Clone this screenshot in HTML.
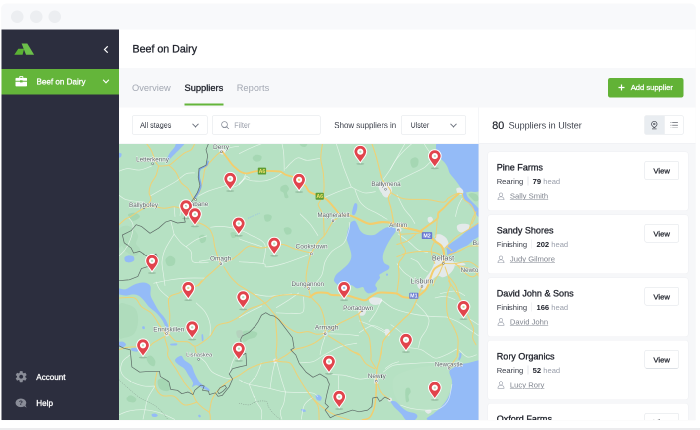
<!DOCTYPE html>
<html lang="en">
<head>
<meta charset="utf-8">
<title>Beef on Dairy – Suppliers</title>
<style>
html,body{margin:0;padding:0;background:#fff;overflow:hidden}
body{width:700px;height:430px;position:relative;font-family:"Liberation Sans",sans-serif;color:#23262f}
#stage{position:absolute;left:0;top:0;width:1400px;height:860px;transform:scale(.5);transform-origin:0 0;overflow:hidden;will-change:transform}
#stage *{box-sizing:border-box}
.abs{position:absolute}
#strip{left:0;top:856px;width:1400px;height:4px;background:#ececee}
#win{left:3px;top:8px;width:1388px;height:832px;border-radius:10px 10px 0 0;overflow:hidden;background:#fff;box-shadow:0 0 2px rgba(40,50,70,.10)}
#tbar{left:0;top:0;width:1388px;height:51px;background:#f8f9fb}
.dot{width:25px;height:25px;border-radius:50%;background:#eceef1;top:13px}
#side{left:0;top:51px;width:235px;height:781px;background:#2c2e3e}
#proj{left:0;top:79px;width:235px;height:51px;background:#64b53a}
.stxt{color:#fff;font-size:16.2px;line-height:20px;white-space:nowrap;-webkit-text-stroke:0.6px #fff}
#head{left:235px;top:51px;width:1153px;height:77px;background:#fff}
#title{left:262px;top:76.4px;font-size:21.3px;line-height:28px;white-space:nowrap;color:#23262f;-webkit-text-stroke:0.6px #23262f}
#tabs{left:235px;top:128px;width:1153px;height:78.6px;background:#f7f8fa}
.tab{top:155.6px;font-size:18.6px;line-height:24px;white-space:nowrap;color:#a3a8b3}
.tab.on{color:#23262f;-webkit-text-stroke:0.6px #23262f}
#uline{left:366px;top:198.6px;width:78px;height:4.8px;background:#64b53a}
#addbtn{left:1213px;top:147.6px;width:150.6px;height:39.2px;background:#62b236;border-radius:4.4px;color:#fff}
#filters{left:235px;top:206.6px;width:719.2px;height:73.8px;background:#fff;border-bottom:1.2px solid #eef0f3}
.box{border:1.4px solid #e0e3e8;border-radius:3px;background:#fff}
.ftxt{font-size:14.4px;line-height:20px;white-space:nowrap;color:#3c404b}
#rhead{left:954.2px;top:206.6px;width:434px;height:72.4px;background:#fff;border-left:1.2px solid #eceef1;border-bottom:1.2px solid #eceef1}
#list{left:954.2px;top:279px;width:434px;height:553px;background:#f6f7f9;border-left:1.2px solid #eceef1}
.card{left:17.6px;width:400.4px;height:117.2px;background:#fff;border-radius:5px;box-shadow:0 0 0 1px #eff0f3}
.card .t{left:17.6px;top:19.2px;font-size:18.1px;line-height:24px;white-space:nowrap;color:#23262f;-webkit-text-stroke:0.6px #23262f}
.card .r{left:17.6px;top:49.2px;font-size:15.2px;line-height:20px;white-space:nowrap;color:#3c404b}
.card .r b{color:#23262f}
.card .r i{font-style:normal;color:#9a9fab}
.card .r .sep{display:inline-block;width:1.2px;height:18px;background:#e3e6ea;vertical-align:-3px;margin:0 8.8px 0 8.8px}
.card .p{left:44px;top:78.4px;font-size:15.32px;line-height:20px;white-space:nowrap;color:#80858f;text-decoration:underline;text-decoration-thickness:1px;text-underline-offset:2.4px}
.card svg.u{left:19.2px;top:80.8px;width:14px;height:15.4px}
.view{left:313.2px;top:18.4px;width:68.8px;height:37.2px;padding-top:1.8px;border:1.6px solid #dde1e6;border-radius:4px;background:#fff;font-size:15.4px;line-height:34.8px;text-align:center;color:#23262f;-webkit-text-stroke:0.5px #23262f}
#map{left:235px;top:280.4px;width:719.2px;height:551.6px;background:#b6e1c3;overflow:hidden}
</style>
</head>
<body>
<div id="stage">
 <div id="strip" class="abs"></div>
 <div id="win" class="abs">
  <div id="tbar" class="abs">
   <div class="dot abs" style="left:18.8px"></div>
   <div class="dot abs" style="left:56.6px"></div>
   <div class="dot abs" style="left:94.4px"></div>
  </div>

  <div id="side" class="abs">
   <svg class="abs" style="left:25px;top:27px;width:42px;height:25px" viewBox="14 43 21 12.5"><path d="M21.600 43.500H27.300L34.100 54.800H26z" fill="#6cc04a"/><path d="M18.300 48.700H24.100L22.600 54.800H14.300z" fill="#5bb234"/></svg>
   <svg class="abs" style="left:204px;top:32px;width:10px;height:16px" viewBox="0 0 5 8"><path d="M4.2 0.8L1 4l3.2 3.2" fill="none" stroke="#fff" stroke-width="1.2"/></svg>
   <div id="proj" class="abs">
    <svg class="abs" style="left:28px;top:14.4px;width:23.2px;height:20.8px" viewBox="0 0 11.6 10.4"><path d="M3.8 1.9V.9c0-.5.4-.9.9-.9h2.2c.5 0 .9.4.9.9v1h2.9c.5 0 .9.4.9.9v2H7.1v-.5H4.5v.5H0v-2c0-.5.4-.9.9-.9zM4.7.9v1h2.2v-1zM0 5.7h4.5v.7h2.6v-.7h4.5v3.8c0 .5-.4.9-.9.9H.9c-.5 0-.9-.4-.9-.9z" fill="#fff"/></svg>
    <div class="abs stxt" style="left:70px;top:15.2px">Beef on Dairy</div>
    <svg class="abs" style="left:201.6px;top:20px;width:14px;height:10px" viewBox="0 0 7 5"><path d="M0.6 0.8l2.9 3 2.9-3" fill="none" stroke="#fff" stroke-width="1.1"/></svg>
   </div>
   <svg class="abs" style="left:26px;top:681.2px;width:26.8px;height:26.8px" viewBox="0 0 24 24"><path fill="#8a8d98" d="M19.4 13c.04-.3.06-.7.06-1s-.02-.7-.07-1l2.1-1.700c.2-.15.25-.42.12-.64l-2-3.460c-.12-.22-.39-.3-.61-.22l-2.490 1c-.52-.4-1.080-.73-1.690-.98l-.38-2.650A.49.49 0 0 0 14 2h-4c-.25 0-.46.18-.49.420l-.38 2.650c-.61.250-1.170.59-1.690.98l-2.490-1c-.23-.09-.49 0-.61.220l-2 3.460c-.13.220-.07.490.12.640l2.110 1.650c-.04.320-.07.650-.07.980s.03.660.07.980l-2.110 1.650c-.19.150-.24.420-.12.640l2 3.460c.12.220.39.300.61.220l2.490-1c.52.400 1.080.73 1.690.98l.38 2.650c.03.240.24.420.49.420h4c.25 0 .46-.18.49-.42l.38-2.650c.61-.25 1.170-.59 1.690-.98l2.490 1c.23.090.49 0 .61-.22l2-3.460c.12-.22.070-.49-.12-.64zM12 15.500c-1.930 0-3.500-1.570-3.500-3.500s1.570-3.500 3.500-3.500 3.500 1.570 3.500 3.500-1.570 3.500-3.500 3.500z"/></svg>
   <div class="abs stxt" style="left:69.6px;top:685.2px">Account</div>
   <svg class="abs" style="left:28px;top:737.6px;width:22.8px;height:18.8px" viewBox="0 0 11.400 9.400"><ellipse cx="5.400" cy="4.300" rx="5.400" ry="4.300" fill="#8a8d98"/><path d="M7.500 7l3.700 2.200-1.800-3.600z" fill="#8a8d98"/><text x="5.400" y="6.700" font-size="6.600" font-weight="bold" text-anchor="middle" fill="#2c2e3e" font-family="Liberation Sans, sans-serif">?</text></svg>
   <div class="abs stxt" style="left:69.6px;top:737.2px">Help</div>
  </div>

  <div id="head" class="abs"></div>
  <div id="title" class="abs">Beef on Dairy</div>

  <div id="tabs" class="abs"></div>
  <div class="tab abs" style="left:261px">Overview</div>
  <div class="tab on abs" style="left:366px">Suppliers</div>
  <div class="tab abs" style="left:470.4px">Reports</div>
  <div id="uline" class="abs"></div>
  <div id="addbtn" class="abs">
   <svg class="abs" style="left:21px;top:13px;width:12px;height:12px" viewBox="0 0 6 6"><path d="M3 0v6M0 3h6" stroke="#fff" stroke-width="1.200"/></svg>
   <div class="abs" style="left:45.4px;top:9.2px;font-size:15.2px;line-height:20px;-webkit-text-stroke:0.5px #fff;white-space:nowrap">Add supplier</div>
  </div>

  <div id="filters" class="abs">
   <div class="box abs" style="left:26px;top:16px;width:151px;height:38.6px">
    <div class="abs ftxt" style="left:15.2px;top:8.4px">All stages</div>
    <svg class="abs" style="left:119.2px;top:14.4px;width:14px;height:10px" viewBox="0 0 7 5"><path d="M0.500 0.800l3 3 3-3" fill="none" stroke="#6b717d" stroke-width=".95"/></svg>
   </div>
   <div class="box abs" style="left:186.4px;top:16px;width:216.8px;height:38.6px">
    <svg class="abs" style="left:16.8px;top:10px;width:16.8px;height:16.8px" viewBox="0 0 8.400 8.400"><circle cx="3.500" cy="3.500" r="2.900" fill="none" stroke="#8e939e" stroke-width=".8"/><path d="M5.600 5.600l2.300 2.300" stroke="#8e939e" stroke-width=".9"/></svg>
    <div class="abs ftxt" style="left:43.2px;top:8.4px;color:#9a9fab">Filter</div>
   </div>
   <div class="abs ftxt" style="left:430.6px;top:26px;font-size:15.8px">Show suppliers in</div>
   <div class="box abs" style="left:564px;top:16px;width:130px;height:38.6px">
    <div class="abs ftxt" style="left:18px;top:8.4px">Ulster</div>
    <svg class="abs" style="left:96.8px;top:14.4px;width:14px;height:10px" viewBox="0 0 7 5"><path d="M0.500 0.800l3 3 3-3" fill="none" stroke="#6b717d" stroke-width=".95"/></svg>
   </div>
  </div>

  <div id="rhead" class="abs">
   <div class="abs" style="left:26.4px;top:22px;font-size:21.4px;line-height:28px;white-space:nowrap;color:#23262f;-webkit-text-stroke:0.4px #23262f">80</div>
   <div class="abs" style="left:59px;top:24.8px;font-size:18.04px;line-height:24px;white-space:nowrap;color:#3c404b">Suppliers in Ulster</div>
   <div class="abs" style="left:330.6px;top:16px;width:78.4px;height:38.8px;border:1.4px solid #dfe3e8;border-radius:3px;background:#fff;overflow:hidden">
    <div class="abs" style="left:0;top:0;width:38.8px;height:36.4px;background:#e9edf1;border-right:1.2px solid #dfe3e8"></div>
    <svg class="abs" style="left:12.4px;top:10px;width:13.2px;height:17.2px" viewBox="0 0 6.600 8.600"><path d="M3.300 .45a2.700 2.700 0 0 1 1.700 4.800L3.300 6.600 1.600 5.250A2.700 2.700 0 0 1 3.300 .45z" fill="none" stroke="#3f434e" stroke-width=".7"/><circle cx="3.300" cy="3" r=".8" fill="none" stroke="#3f434e" stroke-width=".6"/><path d="M1 7.900h4.600" stroke="#3f434e" stroke-width=".7"/></svg>
    <svg class="abs" style="left:51.2px;top:12.4px;width:14.8px;height:12.8px" viewBox="0 0 7.400 6.400"><path d="M0 .7h.9M1.700 .7H7.400M0 3.200h.9M1.700 3.200H7.400M0 5.700h.9M1.700 5.700H7.400" stroke="#3f434e" stroke-width=".6"/></svg>
   </div>
  </div>

  <div id="list" class="abs">
   <div class="card abs" style="top:17px"><div class="t abs">Pine Farms</div><div class="r abs">Rearing<span class="sep"></span><b>79</b> <i>head</i></div><svg class="u abs" viewBox="0 0 7.600 8.400"><circle cx="3.800" cy="2.400" r="1.900" fill="none" stroke="#9a9fab" stroke-width=".7"/><path d="M.5 8c0-2.200 1.300-3.300 3.300-3.300S7.100 5.800 7.100 8z" fill="none" stroke="#9a9fab" stroke-width=".7"/></svg><div class="p abs">Sally Smith</div><div class="view abs">View</div></div>
   <div class="card abs" style="top:142.8px"><div class="t abs">Sandy Shores</div><div class="r abs">Finishing<span class="sep"></span><b>202</b> <i>head</i></div><svg class="u abs" viewBox="0 0 7.600 8.400"><circle cx="3.800" cy="2.400" r="1.900" fill="none" stroke="#9a9fab" stroke-width=".7"/><path d="M.5 8c0-2.200 1.300-3.300 3.300-3.300S7.100 5.800 7.100 8z" fill="none" stroke="#9a9fab" stroke-width=".7"/></svg><div class="p abs">Judy Gilmore</div><div class="view abs">View</div></div>
   <div class="card abs" style="top:268.6px"><div class="t abs">David John &amp; Sons</div><div class="r abs">Finishing<span class="sep"></span><b>166</b> <i>head</i></div><svg class="u abs" viewBox="0 0 7.600 8.400"><circle cx="3.800" cy="2.400" r="1.900" fill="none" stroke="#9a9fab" stroke-width=".7"/><path d="M.5 8c0-2.200 1.300-3.300 3.300-3.300S7.100 5.800 7.100 8z" fill="none" stroke="#9a9fab" stroke-width=".7"/></svg><div class="p abs">David John</div><div class="view abs">View</div></div>
   <div class="card abs" style="top:394.4px"><div class="t abs">Rory Organics</div><div class="r abs">Rearing<span class="sep"></span><b>52</b> <i>head</i></div><svg class="u abs" viewBox="0 0 7.600 8.400"><circle cx="3.800" cy="2.400" r="1.900" fill="none" stroke="#9a9fab" stroke-width=".7"/><path d="M.5 8c0-2.200 1.300-3.300 3.300-3.300S7.100 5.800 7.100 8z" fill="none" stroke="#9a9fab" stroke-width=".7"/></svg><div class="p abs">Lucy Rory</div><div class="view abs">View</div></div>
   <div class="card abs" style="top:520.2px"><div class="t abs">Oxford Farms</div><div class="view abs">View</div></div>
  </div>

  <div id="map" class="abs"><!--MAPSTART--><svg class="abs" style="left:0;top:0;width:719.2px;height:551.6px" viewBox="119 144.2 359.6 275.8" preserveAspectRatio="none">
<rect x="119" y="143" width="361" height="278" fill="#b6e1c3"/>
<path d="M119.0 230.0C120.2 226.5 123.7 226.2 126.0 226.0C128.3 225.8 131.0 227.3 133.0 229.0C135.0 230.7 137.5 233.5 138.0 236.0C138.5 238.5 135.7 241.7 136.0 244.0C136.3 246.3 140.2 248.0 140.0 250.0C139.8 252.0 137.3 255.7 135.0 256.0C132.7 256.3 128.2 253.7 126.0 252.0C123.8 250.3 123.2 246.8 122.0 246.0C120.8 245.2 119.5 249.7 119.0 247.0C118.5 244.3 117.8 233.5 119.0 230.0Z" fill="#afdcbc"/>
<path d="M119.0 306.0C120.5 300.8 125.2 304.3 128.0 305.0C130.8 305.7 134.3 307.2 136.0 310.0C137.7 312.8 138.3 318.0 138.0 322.0C137.7 326.0 136.3 331.3 134.0 334.0C131.7 336.7 126.5 337.7 124.0 338.0C121.5 338.3 119.8 341.3 119.0 336.0C118.2 330.7 117.5 311.2 119.0 306.0Z" fill="#afdcbc"/>
<path d="M252.8 158.0C253.0 156.9 254.6 155.2 256.0 155.0C257.4 154.8 260.7 155.5 261.4 156.5C262.1 157.5 261.1 160.2 260.0 161.0C258.9 161.8 256.2 162.0 255.0 161.5C253.8 161.0 252.6 159.1 252.8 158.0Z" fill="#a5d7b3"/>
<path d="M281.0 187.0C281.9 186.0 284.7 184.7 286.0 185.0C287.3 185.3 288.8 187.7 289.0 189.0C289.2 190.3 287.1 191.6 287.0 193.0C286.9 194.4 288.8 196.7 288.5 197.5C288.2 198.3 285.8 198.8 285.0 198.0C284.2 197.2 284.2 194.2 283.5 193.0C282.8 191.8 280.9 192.0 280.5 191.0C280.1 190.0 280.1 188.0 281.0 187.0Z" fill="#a5d7b3"/>
<path d="M300.0 143.7C300.9 143.2 306.1 143.1 307.0 143.7C307.9 144.2 306.4 146.5 305.5 147.0C304.6 147.5 302.4 147.1 301.5 146.5C300.6 145.9 299.1 144.2 300.0 143.7Z" fill="#a5d7b3"/>
<path d="M410.7 160.0C411.4 158.8 413.7 157.6 415.0 157.6C416.3 157.6 418.0 158.6 418.4 160.0C418.8 161.4 418.4 164.7 417.5 166.0C416.6 167.3 414.1 168.2 413.0 168.0C411.9 167.8 411.3 166.3 410.9 165.0C410.5 163.7 410.0 161.2 410.7 160.0Z" fill="#a5d7b3"/>
<path d="M199.0 237.0C199.3 235.7 201.8 234.8 203.0 235.0C204.2 235.2 205.7 236.8 206.0 238.0C206.3 239.2 205.8 241.2 205.0 242.0C204.2 242.8 202.0 243.8 201.0 243.0C200.0 242.2 198.7 238.3 199.0 237.0Z" fill="#a5d7b3"/>
<path d="M165.5 260.0C165.8 258.3 168.4 256.2 170.0 256.0C171.6 255.8 174.3 257.5 175.0 259.0C175.7 260.5 175.2 263.8 174.0 265.0C172.8 266.2 169.4 266.8 168.0 266.0C166.6 265.2 165.2 261.7 165.5 260.0Z" fill="#a5d7b3"/>
<path d="M264.0 216.0C264.4 214.8 266.7 214.5 268.0 214.6C269.3 214.7 271.4 215.4 271.7 216.5C272.0 217.6 271.0 220.2 270.0 221.0C269.0 221.8 266.5 222.3 265.5 221.5C264.5 220.7 263.6 217.2 264.0 216.0Z" fill="#a5d7b3"/>
<path d="M283.8 229.0C284.1 227.8 286.7 227.3 288.0 227.5C289.3 227.7 291.1 228.9 291.5 230.0C291.9 231.1 291.4 233.3 290.5 234.0C289.6 234.7 287.1 235.2 286.0 234.4C284.9 233.6 283.5 230.2 283.8 229.0Z" fill="#a5d7b3"/>
<path d="M157.7 381.0C158.2 379.2 161.3 378.4 163.0 378.4C164.7 378.4 166.7 379.4 168.0 381.0C169.3 382.6 170.9 386.3 170.7 388.0C170.5 389.7 168.8 391.1 167.0 391.3C165.2 391.5 161.6 390.7 160.0 389.0C158.4 387.3 157.2 382.8 157.7 381.0Z" fill="#a5d7b3"/>
<path d="M126.7 398.0C127.2 397.0 129.4 395.4 131.0 395.6C132.6 395.8 135.7 397.9 136.2 399.0C136.7 400.1 135.4 402.1 134.0 402.5C132.6 402.9 129.2 402.2 128.0 401.5C126.8 400.8 126.2 399.0 126.7 398.0Z" fill="#a5d7b3"/>
<path d="M146.5 358.0C146.8 356.7 149.6 355.5 151.0 356.0C152.4 356.5 154.7 359.3 155.2 361.0C155.7 362.7 155.0 365.9 154.0 366.4C153.0 366.9 150.2 365.4 149.0 364.0C147.8 362.6 146.2 359.3 146.5 358.0Z" fill="#a5d7b3"/>
<path d="M405.5 390.0C406.0 387.7 408.1 387.6 409.0 387.9C409.9 388.2 410.8 390.6 410.7 392.0C410.6 393.4 408.8 394.5 408.5 396.0C408.2 397.5 409.4 400.1 409.0 401.0C408.6 401.9 406.6 403.5 406.0 401.7C405.4 399.9 405.0 392.3 405.5 390.0Z" fill="#a5d7b3"/>
<path d="M435.6 367.4C436.8 367.0 442.2 366.8 443.4 367.2C444.6 367.6 444.2 369.4 443.0 369.8C441.8 370.2 437.2 370.0 436.0 369.6C434.8 369.2 434.4 367.8 435.6 367.4Z" fill="#a5d7b3"/>
<path d="M243.0 332.0C244.2 330.4 247.7 330.8 250.0 331.0C252.3 331.2 256.2 331.9 257.0 333.0C257.8 334.1 256.3 336.4 255.0 337.5C253.7 338.6 250.7 338.8 249.0 339.5C247.3 340.2 246.1 341.8 245.0 342.0C243.9 342.2 242.9 342.2 242.6 340.5C242.3 338.8 241.8 333.6 243.0 332.0Z" fill="#a5d7b3"/>
<path d="M230.5 233.5C230.7 232.6 232.1 232.3 233.0 232.3C233.9 232.3 235.6 232.6 236.0 233.5C236.4 234.4 236.2 236.8 235.5 237.5C234.8 238.2 232.8 238.7 232.0 238.0C231.2 237.3 230.3 234.4 230.5 233.5Z" fill="#a5d7b3"/>
<path d="M128.0 215.0C128.3 213.7 133.0 212.7 135.0 213.0C137.0 213.3 140.3 215.7 140.0 217.0C139.7 218.3 135.0 221.3 133.0 221.0C131.0 220.7 127.7 216.3 128.0 215.0Z" fill="#a5d7b3"/>
<path d="M236.5 331.5C237.2 330.3 240.9 329.9 242.0 330.8C243.1 331.7 243.7 335.8 243.0 337.0C242.3 338.2 239.1 338.7 238.0 337.8C236.9 336.9 235.8 332.7 236.5 331.5Z" fill="#b4d2bd"/>
<path d="M394.0 378.0C396.7 374.0 403.7 372.0 410.0 370.0C416.3 368.0 425.7 366.0 432.0 366.0C438.3 366.0 444.8 367.0 448.0 370.0C451.2 373.0 451.3 379.2 451.0 384.0C450.7 388.8 448.5 394.7 446.0 399.0C443.5 403.3 440.7 407.8 436.0 410.0C431.3 412.2 423.7 412.7 418.0 412.0C412.3 411.3 406.0 409.0 402.0 406.0C398.0 403.0 395.3 398.7 394.0 394.0C392.7 389.3 391.3 382.0 394.0 378.0Z" fill="#b9e2c5"/>
<path d="M405.5 390.0C406.0 387.7 408.1 387.6 409.0 387.9C409.9 388.2 410.8 390.6 410.7 392.0C410.6 393.4 408.8 394.5 408.5 396.0C408.2 397.5 409.4 400.1 409.0 401.0C408.6 401.9 406.6 403.5 406.0 401.7C405.4 399.9 405.0 392.3 405.5 390.0Z" fill="#a5d7b3"/>
<path d="M436.4 143.0C436.3 143.9 435.8 147.2 436.0 148.6C436.2 150.0 436.9 149.8 437.6 151.5C438.4 153.2 439.4 156.7 440.5 158.5C441.6 160.3 443.2 161.0 444.4 162.5C445.6 164.0 446.8 165.7 447.6 167.4C448.5 169.2 448.7 171.4 449.5 173.0C450.3 174.6 451.5 175.8 452.5 177.0C453.5 178.2 454.0 178.7 455.4 180.5C456.8 182.3 459.2 185.7 460.6 187.8C462.0 189.9 463.0 192.2 464.0 193.0C465.0 193.8 465.2 192.8 466.5 192.6C467.8 192.4 469.8 191.9 472.0 192.0C474.2 192.1 478.7 201.2 480.0 193.0C481.3 184.8 480.0 151.3 480.0 143.0Z" fill="#94bbf7"/>
<path d="M462.6 193.5C462.9 194.6 463.4 197.9 464.6 199.8C465.8 201.7 467.9 202.9 469.6 204.8C471.3 206.8 473.3 209.6 474.6 211.5C475.9 213.4 476.6 215.6 477.5 216.5C478.4 217.4 479.6 217.9 480.0 217.0C480.4 216.1 480.6 212.8 480.0 211.0C479.4 209.2 477.9 208.1 476.5 206.5C475.1 204.9 473.0 203.1 471.5 201.5C470.0 199.9 468.4 198.4 467.5 197.0C466.6 195.6 466.4 193.7 466.2 193.0Z" fill="#94bbf7"/>
<path d="M177.0 143.0C178.7 142.2 183.8 142.2 184.5 143.0C185.2 143.8 182.8 146.0 181.0 148.0C179.2 150.0 176.0 153.0 174.0 155.0C172.0 157.0 170.1 159.4 169.0 160.0C167.9 160.6 167.1 159.7 167.3 158.5C167.5 157.3 168.8 154.8 170.0 153.0C171.2 151.2 173.3 149.2 174.5 147.5C175.7 145.8 175.3 143.8 177.0 143.0Z" fill="#94bbf7"/>
<path d="M119.0 153.0C119.4 153.2 121.2 153.3 121.5 154.0C121.8 154.7 121.4 156.3 121.0 157.0C120.6 157.7 119.3 157.8 119.0 158.0Z" fill="#94bbf7"/>
<path d="M351.4 222.1C352.2 221.5 353.9 220.5 354.9 220.9C355.9 221.3 356.2 222.7 357.2 224.4C358.2 226.2 359.1 229.7 360.7 231.4C362.2 233.2 364.2 234.3 366.5 234.9C368.8 235.5 372.2 235.7 374.7 234.9C377.2 234.1 379.5 231.4 381.6 230.2C383.7 228.9 385.3 227.8 387.4 227.4C389.5 227.0 393.0 227.2 394.4 227.9C395.8 228.6 396.2 229.7 395.6 231.4C395.0 233.2 392.4 235.9 390.9 238.4C389.3 240.9 387.6 243.6 386.3 246.5C385.0 249.4 383.2 253.1 382.8 255.8C382.4 258.5 383.0 261.1 384.0 262.8C385.0 264.5 388.2 264.9 389.0 266.0C389.8 267.1 389.3 268.5 388.5 269.5C387.7 270.5 385.5 271.1 384.0 272.0C382.5 272.9 380.2 274.0 379.5 275.0C378.8 276.0 380.4 276.8 380.0 278.0C379.6 279.2 377.8 280.8 377.0 282.0C376.2 283.2 375.3 284.4 375.3 285.5C375.3 286.6 376.9 287.6 377.0 288.5C377.1 289.4 376.8 290.2 376.0 291.0C375.2 291.8 373.3 292.6 372.0 293.0C370.7 293.4 369.2 293.8 368.0 293.5C366.8 293.2 365.8 292.0 365.0 291.0C364.2 290.0 364.3 287.7 363.0 287.3C361.7 286.9 359.0 288.8 357.0 288.5C355.0 288.2 353.0 285.2 351.0 285.3C349.0 285.4 346.8 288.6 345.0 288.8C343.2 289.0 341.3 287.2 340.0 286.5C338.7 285.8 338.0 285.4 337.0 284.5C336.0 283.6 334.3 282.2 334.0 281.0C333.7 279.8 334.5 278.2 335.0 277.0C335.5 275.8 335.7 275.3 337.0 274.0C338.3 272.7 341.0 270.8 343.0 269.0C345.0 267.2 347.6 265.2 349.0 263.0C350.4 260.8 351.4 258.6 351.4 255.8C351.4 253.1 349.9 249.4 349.1 246.5C348.3 243.6 346.9 241.1 346.7 238.4C346.5 235.7 347.3 232.5 347.9 230.2C348.5 227.9 349.6 225.8 350.2 224.4C350.8 223.1 350.6 222.7 351.4 222.1Z" fill="#94bbf7"/>
<path d="M354.9 203.5C355.6 202.9 356.9 203.5 357.2 204.7C357.5 205.9 357.2 208.8 356.7 210.5C356.2 212.2 355.2 214.5 354.4 215.1C353.6 215.7 352.3 215.2 352.1 214.0C351.9 212.8 352.5 209.8 353.0 208.1C353.5 206.3 354.2 204.1 354.9 203.5Z" fill="#94bbf7"/>
<path d="M480.0 221.5C478.2 222.8 472.7 226.5 469.2 229.2C465.7 231.9 462.0 235.4 458.9 237.8C455.8 240.2 452.3 242.3 450.3 243.9C448.3 245.5 447.2 246.3 446.7 247.5C446.1 248.7 446.8 249.8 447.0 251.0C447.2 252.2 446.7 254.5 447.8 255.0C448.9 255.5 452.0 254.7 453.6 253.9C455.2 253.1 456.1 251.2 457.7 250.2C459.3 249.1 461.2 248.5 463.0 247.6C464.8 246.7 466.4 246.3 468.2 245.0C470.0 243.7 472.0 241.5 474.0 240.0C476.0 238.5 479.0 236.8 480.0 236.1Z" fill="#94bbf7"/>
<path d="M119.0 288.6C120.0 288.8 123.0 289.8 124.8 289.6C126.5 289.4 127.6 288.3 129.5 287.4C131.4 286.5 133.9 284.8 136.4 284.0C138.9 283.2 142.3 282.4 144.6 282.8C146.9 283.2 149.4 284.2 150.4 286.3C151.4 288.4 150.0 292.9 150.6 295.6C151.2 298.3 152.6 300.1 153.9 302.6C155.2 305.1 156.8 308.2 158.5 310.7C160.2 313.2 162.7 315.4 164.3 317.7C165.9 320.0 167.2 322.9 167.9 324.7C168.6 326.5 168.4 327.9 168.2 328.5C167.9 329.1 167.4 329.9 166.4 328.5C165.4 327.1 163.7 322.6 162.0 320.0C160.3 317.4 158.3 315.1 156.2 313.0C154.1 310.9 151.1 309.1 149.2 307.2C147.3 305.3 146.3 303.3 144.6 301.4C142.9 299.5 140.7 297.1 138.8 296.0C136.9 294.9 135.1 294.6 133.0 294.6C130.9 294.6 128.3 295.8 126.0 295.8C123.7 295.8 120.2 294.8 119.0 294.6Z" fill="#94bbf7"/>
<path d="M175.0 360.3C175.3 358.7 179.4 356.0 181.0 356.0C182.6 356.0 182.7 358.7 184.4 360.3C186.1 361.9 189.6 363.2 191.3 365.5C193.0 367.8 193.4 371.2 194.8 374.1C196.2 377.0 197.6 380.3 199.9 382.7C202.2 385.1 206.9 387.3 208.5 388.7C210.1 390.1 210.2 391.3 209.4 391.3C208.6 391.3 205.6 389.7 203.4 388.7C201.2 387.7 198.4 385.6 196.5 385.3C194.6 385.0 192.8 387.4 192.2 387.0C191.6 386.6 193.6 384.6 193.0 382.7C192.4 380.8 190.1 378.1 188.7 375.8C187.3 373.5 186.0 370.6 184.4 368.9C182.8 367.2 180.9 366.9 179.3 365.5C177.7 364.1 174.7 361.9 175.0 360.3Z" fill="#94bbf7"/>
<path d="M124.6 257.5C125.1 256.5 127.0 255.8 128.5 255.6C130.0 255.4 132.6 255.8 133.5 256.6C134.4 257.4 134.6 259.5 134.0 260.5C133.4 261.5 131.4 262.3 130.0 262.5C128.6 262.7 126.4 262.4 125.5 261.6C124.6 260.8 124.1 258.5 124.6 257.5Z" fill="#94bbf7"/>
<path d="M151.7 414.5C152.1 414.0 154.0 413.5 155.0 413.7C156.0 413.9 157.5 414.9 157.7 415.5C157.9 416.1 156.9 416.9 156.0 417.1C155.1 417.3 153.2 417.2 152.5 416.8C151.8 416.4 151.3 415.0 151.7 414.5Z" fill="#94bbf7"/>
<path d="M198.2 415.5C198.4 415.1 199.6 414.8 200.0 415.0C200.4 415.2 201.0 416.6 200.8 417.0C200.6 417.4 199.4 417.8 199.0 417.5C198.6 417.2 198.0 415.9 198.2 415.5Z" fill="#94bbf7"/>
<path d="M133.6 350.0C134.2 349.8 137.4 349.7 138.0 350.0C138.6 350.3 137.6 351.6 137.0 351.9C136.4 352.1 135.1 351.8 134.5 351.5C133.9 351.2 133.0 350.2 133.6 350.0Z" fill="#94bbf7"/>
<path d="M119.0 342.0C119.7 342.0 121.8 341.6 123.0 342.0C124.2 342.4 125.7 343.7 125.9 344.5C126.1 345.3 125.2 346.6 124.0 347.0C122.8 347.4 119.8 347.0 119.0 347.0Z" fill="#94bbf7"/>
<path d="M131.0 349.0C131.5 348.5 133.8 347.8 135.0 348.0C136.2 348.2 137.8 349.4 138.0 350.0C138.2 350.6 137.0 351.4 136.0 351.6C135.0 351.8 132.8 351.4 132.0 351.0C131.2 350.6 130.5 349.5 131.0 349.0Z" fill="#94bbf7"/>
<path d="M142.2 327.0C142.4 326.6 143.9 326.3 144.3 326.6C144.7 326.9 145.1 328.4 144.8 328.8C144.6 329.2 143.2 329.5 142.8 329.2C142.4 328.9 141.9 327.4 142.2 327.0Z" fill="#94bbf7"/>
<path d="M201.6 335.0C201.8 334.0 202.7 334.1 203.0 335.0C203.3 335.9 203.6 339.5 203.4 340.5C203.2 341.5 202.3 341.9 202.0 341.0C201.7 340.1 201.4 336.0 201.6 335.0Z" fill="#94bbf7"/>
<path d="M170.7 344.0C171.6 343.7 175.5 343.4 176.5 343.6C177.5 343.8 177.6 345.1 176.7 345.4C175.8 345.7 172.0 345.8 171.0 345.6C170.0 345.4 169.8 344.3 170.7 344.0Z" fill="#94bbf7"/>
<path d="M315.6 396.0C315.9 395.2 317.5 394.9 318.5 395.1C319.5 395.4 321.3 396.6 321.6 397.5C321.9 398.4 321.3 400.4 320.5 400.8C319.7 401.2 317.8 400.8 317.0 400.0C316.2 399.2 315.4 396.8 315.6 396.0Z" fill="#94bbf7"/>
<path d="M301.0 409.6C301.2 409.2 303.1 409.1 304.0 409.4C304.9 409.7 306.3 411.1 306.1 411.5C305.9 411.9 303.9 412.3 303.0 412.0C302.1 411.7 300.8 410.0 301.0 409.6Z" fill="#94bbf7"/>
<path d="M386.2 274.0C386.5 273.7 387.5 273.7 387.8 274.0C388.1 274.3 388.1 275.4 387.8 275.7C387.5 276.0 386.5 276.0 386.2 275.7C385.9 275.4 385.9 274.3 386.2 274.0Z" fill="#94bbf7"/>
<path d="M390.0 401.4C390.9 401.4 393.7 400.8 395.5 401.7C397.3 402.6 399.0 405.1 401.0 406.8C403.0 408.5 405.2 410.5 407.5 411.6C409.8 412.7 413.4 412.8 415.0 413.6C416.6 414.4 417.5 415.5 417.4 416.6C417.2 417.8 415.9 419.9 414.1 420.5C412.3 421.1 408.6 421.6 406.5 420.5C404.4 419.4 403.4 416.4 401.3 414.2C399.2 412.0 395.4 408.4 394.2 407.3Z" fill="#94bbf7"/>
<path d="M459.4 353.4C459.7 352.9 461.0 353.0 461.3 353.6C461.6 354.2 461.5 355.9 461.2 357.0C460.9 358.1 460.1 359.9 459.6 360.3C459.1 360.7 458.4 360.1 458.3 359.5C458.2 358.9 459.1 357.5 459.3 356.5C459.5 355.5 459.1 353.9 459.4 353.4Z" fill="#94bbf7"/>
<path d="M480.0 360.0C478.2 360.5 472.4 362.1 469.2 362.9C466.0 363.7 463.5 363.6 460.6 364.6C457.7 365.6 453.9 367.6 452.0 368.9C450.1 370.2 449.4 370.4 449.4 372.4C449.4 374.4 451.7 378.1 452.0 381.0C452.3 383.9 452.0 386.5 451.1 389.6C450.2 392.8 448.7 396.8 446.8 399.9C444.9 403.0 442.0 406.2 439.9 408.5C437.8 410.8 435.7 411.5 434.0 413.5C432.3 415.5 421.8 419.3 429.5 420.5C437.2 421.7 471.6 420.5 480.0 420.5Z" fill="#94bbf7"/>
<path d="M466.8 193.5C467.3 193.2 468.6 192.2 470.0 192.0C471.4 191.8 473.3 192.0 475.0 192.2C476.7 192.4 479.2 190.6 480.0 193.0C480.8 195.4 480.7 204.8 480.0 206.5C479.3 208.2 477.5 204.7 476.0 203.5C474.5 202.3 472.4 200.7 471.0 199.5C469.6 198.3 468.1 197.0 467.5 196.5Z" fill="#b6e1c3"/>
<path d="M468.5 194.5C468.7 193.7 470.6 193.2 472.0 193.3C473.4 193.4 475.9 193.9 477.0 195.0C478.1 196.1 478.9 198.9 478.6 200.0C478.3 201.1 476.3 201.8 475.0 201.5C473.7 201.2 472.1 199.2 471.0 198.0C469.9 196.8 468.3 195.3 468.5 194.5Z" fill="#a5d7b3"/>
<path d="M378.5 187.0C378.4 185.3 379.9 184.3 381.0 183.5C382.1 182.7 383.5 181.8 385.0 182.0C386.5 182.2 388.8 183.5 390.0 185.0C391.2 186.5 392.1 189.1 392.0 191.0C391.9 192.9 390.7 195.4 389.5 196.5C388.3 197.6 386.3 198.0 385.0 197.5C383.7 197.0 382.6 195.2 381.5 193.5C380.4 191.8 378.6 188.7 378.5 187.0Z" fill="#e4eaea"/>
<path d="M456.3 189.0C456.6 188.0 458.9 187.5 460.0 187.8C461.1 188.1 462.9 189.8 463.2 191.0C463.5 192.2 462.9 194.2 462.0 194.7C461.1 195.2 458.9 194.9 458.0 194.0C457.1 193.1 456.0 190.0 456.3 189.0Z" fill="#e4eaea"/>
<path d="M434.8 236.0C435.3 234.7 438.1 234.1 440.0 234.4C441.9 234.7 444.6 236.4 446.0 238.0C447.4 239.6 448.5 242.3 448.5 244.0C448.5 245.7 447.2 247.6 446.0 248.0C444.8 248.4 442.5 247.4 441.0 246.4C439.5 245.4 438.0 243.7 437.0 242.0C436.0 240.3 434.3 237.3 434.8 236.0Z" fill="#e4eaea"/>
<path d="M434.7 260.7C435.4 259.5 436.8 257.8 438.0 257.5C439.2 257.2 439.9 258.6 442.0 259.0C444.1 259.4 448.3 259.2 450.4 260.0C452.5 260.8 454.1 262.3 454.6 263.8C455.1 265.3 454.5 267.4 453.6 269.1C452.7 270.9 451.1 272.9 449.4 274.3C447.6 275.7 445.0 277.2 443.1 277.5C441.2 277.8 439.6 275.7 437.8 276.0C436.1 276.3 434.4 278.1 432.6 279.5C430.8 280.9 428.4 283.8 427.0 284.5C425.6 285.2 424.2 284.5 424.0 283.5C423.8 282.5 424.4 280.5 425.5 278.5C426.6 276.5 429.1 273.8 430.5 271.5C431.9 269.2 433.0 266.7 433.7 264.9C434.4 263.1 434.0 261.9 434.7 260.7Z" fill="#e4eaea"/>
<path d="M454.6 262.6C455.8 262.1 461.2 262.7 463.0 263.1C464.8 263.5 466.3 264.7 465.1 265.2C463.9 265.7 457.4 266.3 455.6 265.9C453.9 265.5 453.4 263.1 454.6 262.6Z" fill="#e4eaea"/>
<path d="M457.1 226.0C457.8 224.8 460.0 224.2 462.0 224.0C464.0 223.8 468.2 224.0 469.2 225.0C470.2 226.0 469.2 228.7 468.0 230.0C466.8 231.3 463.7 232.5 462.0 232.7C460.3 232.9 458.8 232.1 458.0 231.0C457.2 229.9 456.4 227.2 457.1 226.0Z" fill="#e4eaea"/>
<path d="M427.9 218.0C428.4 217.2 430.1 216.7 431.0 217.0C431.9 217.3 433.2 219.0 433.0 220.0C432.8 221.0 430.8 222.8 430.0 223.0C429.2 223.2 428.4 222.3 428.0 221.5C427.6 220.7 427.4 218.8 427.9 218.0Z" fill="#e4eaea"/>
<path d="M396.5 228.0C397.2 227.4 399.2 227.0 400.0 227.5C400.8 228.0 401.8 230.2 401.5 231.0C401.2 231.8 399.4 232.5 398.5 232.5C397.6 232.5 396.3 231.8 396.0 231.0C395.7 230.2 395.8 228.6 396.5 228.0Z" fill="#e4eaea"/>
<path d="M369.3 299.0C370.0 298.1 372.0 297.4 374.0 297.4C376.0 297.4 380.4 297.9 381.4 299.0C382.4 300.1 381.2 303.0 380.0 304.0C378.8 305.0 375.7 305.3 374.0 305.1C372.3 304.9 370.8 304.0 370.0 303.0C369.2 302.0 368.6 299.9 369.3 299.0Z" fill="#e4eaea"/>
<path d="M359.0 307.5C359.7 306.2 361.8 306.4 363.0 307.0C364.2 307.6 365.8 309.6 366.0 311.0C366.2 312.4 365.2 314.7 364.0 315.4C362.8 316.1 359.8 316.3 359.0 315.0C358.2 313.7 358.3 308.8 359.0 307.5Z" fill="#e4eaea"/>
<path d="M384.8 330.0C385.2 328.9 387.1 328.9 388.0 329.2C388.9 329.5 389.8 330.9 390.0 332.0C390.2 333.1 389.8 335.5 389.0 336.1C388.2 336.7 386.2 336.5 385.5 335.5C384.8 334.5 384.4 331.1 384.8 330.0Z" fill="#e4eaea"/>
<path d="M417.5 283.5C418.2 282.7 420.3 282.5 422.0 282.7C423.7 282.9 427.1 283.4 427.9 284.5C428.7 285.6 428.1 288.1 427.0 289.0C425.9 289.9 422.5 289.9 421.0 289.6C419.5 289.4 418.6 288.5 418.0 287.5C417.4 286.5 416.8 284.3 417.5 283.5Z" fill="#e4eaea"/>
<path d="M219.3 150.0C219.7 149.1 221.5 148.6 222.5 148.8C223.5 149.0 225.2 150.1 225.5 151.0C225.8 151.9 224.9 154.0 224.0 154.5C223.1 155.0 221.1 154.8 220.3 154.0C219.5 153.2 218.9 150.9 219.3 150.0Z" fill="#e4eaea"/>
<path d="M219.0 262.0C219.5 261.4 221.2 261.2 222.0 261.5C222.8 261.8 223.6 263.2 223.5 264.0C223.4 264.8 222.2 265.8 221.5 266.0C220.8 266.2 219.4 265.7 219.0 265.0C218.6 264.3 218.5 262.6 219.0 262.0Z" fill="#e4eaea"/>
<path d="M309.5 252.0C310.0 251.5 311.8 251.1 312.5 251.5C313.2 251.9 313.8 253.8 313.5 254.5C313.2 255.2 311.7 256.0 311.0 256.0C310.3 256.0 309.6 255.2 309.3 254.5C309.1 253.8 309.0 252.5 309.5 252.0Z" fill="#e4eaea"/>
<path d="M331.3 219.0C331.8 218.4 333.3 218.2 334.0 218.5C334.7 218.8 335.6 220.3 335.5 221.0C335.4 221.7 334.2 222.7 333.5 222.8C332.8 222.9 331.7 222.4 331.3 221.8C330.9 221.2 330.9 219.6 331.3 219.0Z" fill="#e4eaea"/>
<path d="M323.3 332.0C323.9 331.4 325.8 331.1 326.5 331.5C327.2 331.9 328.0 333.7 327.8 334.5C327.6 335.3 326.3 336.4 325.5 336.5C324.7 336.6 323.4 335.8 323.0 335.0C322.6 334.2 322.7 332.6 323.3 332.0Z" fill="#e4eaea"/>
<path d="M374.5 379.0C375.0 378.2 376.8 378.0 377.5 378.5C378.2 379.0 378.7 381.0 378.5 382.0C378.3 383.0 377.2 384.3 376.5 384.5C375.8 384.7 374.6 383.9 374.3 383.0C374.0 382.1 374.0 379.8 374.5 379.0Z" fill="#e4eaea"/>
<path d="M273.5 359.5C274.0 358.9 275.8 358.7 276.5 359.0C277.2 359.3 278.0 360.8 277.8 361.5C277.6 362.2 276.2 363.2 275.5 363.3C274.8 363.4 273.6 362.9 273.3 362.3C273.0 361.7 273.0 360.1 273.5 359.5Z" fill="#e4eaea"/>
<path d="M164.0 331.5C164.3 330.5 166.0 330.3 167.0 330.5C168.0 330.7 169.6 331.6 169.8 332.5C170.1 333.4 169.3 335.4 168.5 336.0C167.7 336.6 165.8 337.1 165.0 336.3C164.2 335.6 163.7 332.5 164.0 331.5Z" fill="#e4eaea"/>
<path d="M151.0 158.8C151.5 158.4 153.2 158.1 153.8 158.5C154.4 158.9 154.7 160.4 154.5 161.0C154.3 161.6 153.1 162.0 152.5 162.0C151.9 162.0 151.1 161.5 150.8 161.0C150.6 160.5 150.5 159.2 151.0 158.8Z" fill="#e4eaea"/>
<path d="M447.5 367.0C447.9 366.5 449.4 366.2 450.0 366.5C450.6 366.8 451.0 368.4 450.8 369.0C450.6 369.6 449.6 370.2 449.0 370.3C448.4 370.4 447.6 369.9 447.3 369.3C447.1 368.8 447.1 367.5 447.5 367.0Z" fill="#e4eaea"/>
<path d="M307.3 287.0C307.8 286.5 309.4 286.1 310.0 286.5C310.6 286.9 311.2 288.8 311.0 289.5C310.8 290.2 309.5 290.8 308.8 290.8C308.1 290.8 307.2 290.1 307.0 289.5C306.8 288.9 306.8 287.5 307.3 287.0Z" fill="#e4eaea"/>
<path d="M388.0 398.5C388.5 398.0 390.3 397.7 391.0 398.0C391.7 398.3 392.2 399.8 392.0 400.5C391.8 401.2 390.7 401.9 390.0 402.0C389.3 402.1 388.3 401.6 388.0 401.0C387.7 400.4 387.5 399.0 388.0 398.5Z" fill="#e4eaea"/>
<path d="M425.0 411.0C425.3 410.3 428.9 409.8 430.0 410.0C431.1 410.2 431.8 411.3 431.5 412.0C431.2 412.7 429.1 414.2 428.0 414.0C426.9 413.8 424.7 411.7 425.0 411.0Z" fill="#e4eaea"/>
<path d="M282.0 143.7C282.2 145.1 283.2 149.3 283.5 152.0C283.8 154.7 283.9 156.8 284.0 160.0C284.1 163.2 284.2 169.2 284.2 171.0" fill="none" stroke="#fff" stroke-opacity=".62" stroke-width=".7"/>
<path d="M285.5 169.0C286.4 168.0 288.9 164.8 291.0 163.0C293.1 161.2 295.3 158.4 298.0 158.0C300.7 157.6 303.3 160.4 307.0 160.5C310.7 160.6 317.8 158.8 320.0 158.5" fill="none" stroke="#fff" stroke-opacity=".62" stroke-width=".7"/>
<path d="M239.0 184.0C240.0 183.2 242.8 179.5 245.0 179.0C247.2 178.5 248.7 180.7 252.0 181.0C255.3 181.3 261.0 181.7 265.0 181.0C269.0 180.3 273.0 178.5 276.0 177.0C279.0 175.5 281.8 172.8 283.0 172.0" fill="none" stroke="#fff" stroke-opacity=".62" stroke-width=".7"/>
<path d="M336.2 143.7C336.8 145.5 338.5 150.8 339.7 154.6C340.9 158.4 341.3 160.9 343.2 166.3C345.1 171.7 349.9 183.7 351.3 187.2" fill="none" stroke="#fff" stroke-opacity=".62" stroke-width=".7"/>
<path d="M354.8 189.5C355.6 191.4 357.6 198.0 359.5 201.1C361.4 204.2 363.7 206.1 366.4 208.1C369.1 210.1 372.2 210.9 375.7 212.8C379.2 214.7 385.4 218.5 387.4 219.7" fill="none" stroke="#fff" stroke-opacity=".62" stroke-width=".7"/>
<path d="M383.0 180.0C384.2 178.3 387.8 173.3 390.0 170.0C392.2 166.7 393.5 163.3 396.0 160.0C398.5 156.7 402.3 152.7 405.0 150.0C407.7 147.3 410.8 144.8 412.0 143.7" fill="none" stroke="#fff" stroke-opacity=".62" stroke-width=".7"/>
<path d="M392.0 184.0C393.3 183.3 396.7 181.7 400.0 180.0C403.3 178.3 408.0 176.0 412.0 174.0C416.0 172.0 420.8 170.0 424.0 168.0C427.2 166.0 429.3 162.3 431.0 162.0C432.7 161.7 433.5 165.3 434.0 166.0" fill="none" stroke="#fff" stroke-opacity=".62" stroke-width=".7"/>
<path d="M174.1 234.4 L170.7 220.6" fill="none" stroke="#fff" stroke-opacity=".62" stroke-width=".7"/>
<path d="M174.1 234.4C172.6 237.0 167.0 245.4 165.0 250.0C163.0 254.6 162.2 257.8 162.0 262.0C161.8 266.2 163.0 271.0 163.5 275.0C164.0 279.0 164.8 284.2 165.0 286.0" fill="none" stroke="#fff" stroke-opacity=".62" stroke-width=".7"/>
<path d="M174.1 234.4C175.2 235.8 178.2 240.1 181.0 243.0C183.8 245.9 189.0 248.4 191.0 251.6C193.0 254.8 190.1 260.0 193.0 261.9C195.9 263.8 205.9 262.6 208.5 262.8" fill="none" stroke="#fff" stroke-opacity=".62" stroke-width=".7"/>
<path d="M153.4 283.5C156.3 282.9 164.9 280.9 170.7 280.0C176.4 279.1 182.2 278.6 187.9 278.3C193.6 278.0 202.2 278.3 205.1 278.3" fill="none" stroke="#fff" stroke-opacity=".62" stroke-width=".7"/>
<path d="M239.0 261.9C243.0 262.2 258.4 262.8 263.0 263.7C267.6 264.6 263.0 267.1 266.5 267.1C270.0 267.1 276.9 265.7 283.8 263.7C290.7 261.7 304.0 256.4 308.0 255.0" fill="none" stroke="#fff" stroke-opacity=".62" stroke-width=".7"/>
<path d="M263.0 263.7C263.3 260.5 267.1 249.6 264.8 244.7C262.5 239.8 253.0 236.7 249.3 234.4C245.6 232.1 243.6 231.6 242.4 231.0" fill="none" stroke="#fff" stroke-opacity=".62" stroke-width=".7"/>
<path d="M313.0 286.0C314.4 284.3 319.6 279.7 321.6 275.7C323.6 271.7 323.4 265.9 325.1 261.9C326.8 257.9 328.9 254.8 332.0 251.6C335.1 248.4 341.1 246.7 344.0 243.0C346.9 239.3 348.3 232.6 349.2 229.2C350.1 225.8 349.2 223.5 349.2 222.3" fill="none" stroke="#fff" stroke-opacity=".62" stroke-width=".7"/>
<path d="M381.4 300.0C383.4 301.4 388.5 306.2 393.4 308.5C398.3 310.8 404.9 312.4 410.7 313.7C416.4 315.0 421.9 315.7 427.9 316.3C433.9 316.9 443.6 317.1 446.8 317.2" fill="none" stroke="#fff" stroke-opacity=".62" stroke-width=".7"/>
<path d="M415.8 303.4C417.2 304.8 422.2 309.2 424.4 312.0C426.6 314.8 428.6 317.1 429.0 320.0C429.4 322.9 428.1 326.2 426.7 329.3C425.3 332.4 422.3 335.5 420.9 338.6C419.5 341.7 418.9 346.3 418.5 347.9" fill="none" stroke="#fff" stroke-opacity=".62" stroke-width=".7"/>
<path d="M439.9 293.9C442.5 293.5 451.2 290.9 455.4 291.3C459.6 291.7 463.4 295.2 465.0 296.0" fill="none" stroke="#fff" stroke-opacity=".62" stroke-width=".7"/>
<path d="M446.8 317.2C448.7 318.0 454.1 319.9 458.0 322.0C461.9 324.1 466.6 327.7 470.0 330.0C473.4 332.3 477.2 335.0 478.6 336.0" fill="none" stroke="#fff" stroke-opacity=".62" stroke-width=".7"/>
<path d="M359.0 321.0C361.2 321.8 367.7 324.0 372.0 326.0C376.3 328.0 382.8 331.8 385.0 333.0" fill="none" stroke="#fff" stroke-opacity=".62" stroke-width=".7"/>
<path d="M383.1 372.4C384.8 371.2 388.8 366.9 393.4 365.5C398.0 364.1 404.9 364.2 410.7 363.8C416.4 363.4 423.6 363.0 427.9 362.9C432.2 362.8 435.1 362.9 436.5 362.9" fill="none" stroke="#fff" stroke-opacity=".62" stroke-width=".7"/>
<path d="M400.3 405.1C402.0 405.7 406.1 407.6 410.7 408.5C415.3 409.4 423.0 410.3 427.9 410.3C432.8 410.3 436.5 410.2 439.9 408.5C443.3 406.8 446.5 403.9 448.5 399.9C450.5 395.9 451.4 387.0 452.0 384.4" fill="none" stroke="#fff" stroke-opacity=".62" stroke-width=".7"/>
<path d="M239.0 380.0C240.7 380.7 244.1 382.9 249.3 384.4C254.5 385.8 264.0 387.4 270.0 388.7C276.0 390.0 278.6 391.5 285.5 392.2C292.4 392.9 305.9 392.2 311.3 393.0C316.7 393.8 316.9 396.3 318.0 397.0" fill="none" stroke="#fff" stroke-opacity=".62" stroke-width=".7"/>
<path d="M270.0 388.7C270.4 386.0 271.7 376.8 272.6 372.4C273.5 367.9 274.8 363.7 275.2 362.0" fill="none" stroke="#fff" stroke-opacity=".62" stroke-width=".7"/>
<path d="M285.5 392.2C284.6 389.5 281.7 380.7 280.3 375.8C278.9 370.9 277.5 365.0 276.9 362.9" fill="none" stroke="#fff" stroke-opacity=".62" stroke-width=".7"/>
<path d="M285.5 392.2C285.2 394.1 284.7 400.1 283.8 403.4C282.9 406.7 280.6 409.3 280.3 412.0C280.0 414.7 281.7 418.4 282.0 419.7" fill="none" stroke="#fff" stroke-opacity=".62" stroke-width=".7"/>
<path d="M249.3 384.4C250.5 387.3 254.2 397.4 256.2 401.7C258.2 406.0 260.5 407.3 261.4 410.3C262.3 413.3 261.4 418.1 261.4 419.7" fill="none" stroke="#fff" stroke-opacity=".62" stroke-width=".7"/>
<path d="M299.0 363.0C301.3 362.8 308.7 363.2 313.0 361.9C317.3 360.5 320.0 357.4 324.6 354.9C329.2 352.4 335.5 348.6 340.9 346.7C346.3 344.8 354.4 343.9 357.1 343.3" fill="none" stroke="#fff" stroke-opacity=".62" stroke-width=".7"/>
<path d="M338.5 375.8 L338.5 389.8" fill="none" stroke="#fff" stroke-opacity=".62" stroke-width=".7"/>
<path d="M331.6 374.7C333.9 374.9 340.9 375.0 345.5 375.8C350.1 376.6 355.6 378.9 359.5 379.3C363.4 379.7 367.2 378.3 368.8 378.1" fill="none" stroke="#fff" stroke-opacity=".62" stroke-width=".7"/>
<path d="M385.0 368.8C386.2 368.0 389.7 365.4 392.0 364.2C394.3 363.0 397.8 362.3 399.0 361.9" fill="none" stroke="#fff" stroke-opacity=".62" stroke-width=".7"/>
<path d="M301.3 419.7C301.8 417.3 302.4 408.8 304.4 405.1C306.3 401.4 311.6 398.6 313.0 397.3" fill="none" stroke="#fff" stroke-opacity=".62" stroke-width=".7"/>
<path d="M130.2 355.0C128.9 356.2 123.9 359.2 122.4 362.0C120.9 364.8 120.1 369.0 121.0 372.0C121.9 375.0 124.3 377.7 128.0 380.0C131.7 382.3 138.5 385.0 143.0 386.0C147.5 387.0 153.0 386.2 155.0 386.2" fill="none" stroke="#fff" stroke-opacity=".62" stroke-width=".7"/>
<path d="M155.0 386.2C153.8 388.2 149.7 394.0 148.0 398.0C146.3 402.0 145.8 406.4 145.0 410.0C144.2 413.6 143.3 418.1 143.0 419.7" fill="none" stroke="#fff" stroke-opacity=".62" stroke-width=".7"/>
<path d="M119.0 415.0C120.8 414.3 125.7 411.8 130.0 411.0C134.3 410.2 140.0 409.7 145.0 410.0C150.0 410.3 155.0 411.4 160.0 413.0C165.0 414.6 172.5 418.6 175.0 419.7" fill="none" stroke="#fff" stroke-opacity=".62" stroke-width=".7"/>
<path d="M239.0 350.0C237.9 352.0 234.2 358.0 232.6 362.0C231.0 366.0 229.8 372.1 229.2 374.1" fill="none" stroke="#fff" stroke-opacity=".62" stroke-width=".7"/>
<path d="M196.5 355.0C197.9 356.2 202.4 359.2 205.0 362.0C207.6 364.8 208.7 369.3 212.0 372.0C215.3 374.7 221.6 376.8 225.0 378.0C228.4 379.2 231.3 379.1 232.6 379.3" fill="none" stroke="#fff" stroke-opacity=".62" stroke-width=".7"/>
<path d="M168.9 298.2C167.4 296.8 162.2 292.7 160.0 290.0C157.8 287.3 156.7 283.3 156.0 282.0" fill="none" stroke="#fff" stroke-opacity=".62" stroke-width=".7"/>
<path d="M239.0 318.0C240.8 317.0 246.2 314.0 250.0 312.0C253.8 310.0 260.0 307.0 262.0 306.0" fill="none" stroke="#fff" stroke-opacity=".62" stroke-width=".7"/>
<path d="M276.0 308.0C278.2 306.7 285.2 302.5 289.0 300.0C292.8 297.5 297.3 294.2 299.0 293.0" fill="none" stroke="#fff" stroke-opacity=".62" stroke-width=".7"/>
<path d="M276.0 313.0C278.3 313.1 285.5 313.7 290.0 313.5C294.5 313.3 300.8 314.8 303.0 312.0C305.2 309.2 303.4 299.5 303.5 297.0" fill="none" stroke="#fff" stroke-opacity=".62" stroke-width=".7"/>
<path d="M325.0 337.0C324.5 338.5 322.8 343.0 322.0 346.0C321.2 349.0 320.3 353.5 320.0 355.0" fill="none" stroke="#fff" stroke-opacity=".62" stroke-width=".7"/>
<path d="M328.5 334.0C331.2 334.1 339.9 334.2 345.0 334.5C350.1 334.8 356.7 335.8 359.0 336.0" fill="none" stroke="#fff" stroke-opacity=".62" stroke-width=".7"/>
<path d="M239.0 154.0C240.3 153.3 244.2 151.3 247.0 150.0C249.8 148.7 253.5 147.1 256.0 146.0C258.5 144.9 261.0 144.1 262.0 143.7" fill="none" stroke="#fff" stroke-opacity=".62" stroke-width=".7"/>
<path d="M128.0 217.0C128.8 218.3 132.5 221.5 133.0 225.0C133.5 228.5 132.3 233.8 131.0 238.0C129.7 242.2 127.0 247.0 125.0 250.0C123.0 253.0 120.0 255.0 119.0 256.0" fill="none" stroke="#fff" stroke-opacity=".62" stroke-width=".7"/>
<path d="M150.0 196.4C152.0 195.2 157.7 191.9 162.0 189.5C166.3 187.1 171.8 184.3 175.8 181.7C179.8 179.1 182.9 175.4 186.1 174.0C189.3 172.6 193.4 173.2 194.8 173.1" fill="none" stroke="#fff" stroke-opacity=".62" stroke-width=".7"/>
<path d="M119.0 171.4C120.4 171.0 124.1 169.0 127.6 168.8C131.0 168.6 135.7 170.6 139.7 170.2C143.7 169.8 149.7 166.9 151.7 166.2" fill="none" stroke="#fff" stroke-opacity=".62" stroke-width=".7"/>
<path d="M119.0 195.5C120.2 196.2 123.0 198.8 125.9 199.8C128.8 200.8 133.0 201.1 136.2 201.5C139.3 201.9 143.4 202.2 144.8 202.4" fill="none" stroke="#fff" stroke-opacity=".62" stroke-width=".7"/>
<path d="M198.2 196.4C199.9 195.5 204.5 192.8 208.5 191.2C212.5 189.6 218.6 188.2 222.3 186.9C226.0 185.6 229.5 184.1 230.9 183.5" fill="none" stroke="#fff" stroke-opacity=".62" stroke-width=".7"/>
<path d="M222.3 153.3C223.5 152.5 226.4 149.3 229.2 148.2C232.0 147.0 237.4 146.7 239.0 146.4" fill="none" stroke="#fff" stroke-opacity=".62" stroke-width=".7"/>
<path d="M174.1 206.7 L175.0 217.0" fill="none" stroke="#fff" stroke-opacity=".62" stroke-width=".7"/>
<path d="M181.0 208.4 L180.0 216.0" fill="none" stroke="#fff" stroke-opacity=".62" stroke-width=".7"/>
<path d="M351.3 187.2C349.2 188.0 343.3 189.9 338.5 191.8C333.7 193.7 325.0 197.6 322.3 198.8" fill="none" stroke="#fff" stroke-opacity=".62" stroke-width=".7"/>
<path d="M239.0 185.2C239.7 184.3 241.8 181.9 243.0 180.0C244.2 178.1 245.4 175.0 245.9 174.0" fill="none" stroke="#fff" stroke-opacity=".62" stroke-width=".7"/>
<path d="M351.3 187.2C353.4 188.2 360.0 192.2 364.1 193.0C368.2 193.8 373.8 192.0 375.7 191.8" fill="none" stroke="#fff" stroke-opacity=".62" stroke-width=".7"/>
<path d="M396.9 194.7C398.0 197.0 401.5 204.7 403.8 208.4C406.1 212.1 408.8 214.4 410.7 217.0C412.6 219.6 414.3 222.8 415.0 224.0" fill="none" stroke="#fff" stroke-opacity=".62" stroke-width=".7"/>
<path d="M462.3 198.1C461.6 199.5 459.1 203.5 458.0 206.7C456.9 209.8 455.8 215.3 455.4 217.0" fill="none" stroke="#fff" stroke-opacity=".62" stroke-width=".7"/>
<path d="M210.3 227.5C212.3 227.3 217.5 226.3 222.3 226.6C227.1 226.9 236.2 228.8 239.0 229.2" fill="none" stroke="#fff" stroke-opacity=".62" stroke-width=".7"/>
<path d="M398.0 234.0C400.0 235.5 406.7 240.3 410.0 243.0C413.3 245.7 415.0 248.3 418.0 250.0C421.0 251.7 426.3 252.5 428.0 253.0" fill="none" stroke="#fff" stroke-opacity=".62" stroke-width=".7"/>
<path d="M410.7 258.5C411.8 259.1 415.5 260.2 417.5 261.9C419.5 263.6 421.0 267.1 422.7 268.8C424.4 270.5 427.0 271.7 427.9 272.3" fill="none" stroke="#fff" stroke-opacity=".62" stroke-width=".7"/>
<path d="M396.9 263.7C398.0 265.1 401.5 270.0 403.8 272.3C406.1 274.6 408.3 275.6 410.7 277.4C413.1 279.2 416.8 282.1 418.0 283.0" fill="none" stroke="#fff" stroke-opacity=".62" stroke-width=".7"/>
<path d="M381.4 300.0C380.5 302.0 378.1 308.3 376.0 312.0C373.9 315.7 370.2 320.3 369.0 322.0" fill="none" stroke="#fff" stroke-opacity=".62" stroke-width=".7"/>
<path d="M359.0 333.0C361.3 331.8 368.5 326.1 372.8 325.8C377.1 325.5 382.8 330.1 384.8 331.0" fill="none" stroke="#fff" stroke-opacity=".62" stroke-width=".7"/>
<path d="M434.8 298.2C436.5 297.9 441.7 296.2 445.1 296.5C448.5 296.8 453.7 299.3 455.4 299.9" fill="none" stroke="#fff" stroke-opacity=".62" stroke-width=".7"/>
<path d="M469.2 318.9 L478.6 325.0" fill="none" stroke="#fff" stroke-opacity=".62" stroke-width=".7"/>
<path d="M261.4 363.0C260.5 365.1 258.2 372.2 256.2 375.8C254.2 379.4 250.5 383.0 249.3 384.4" fill="none" stroke="#fff" stroke-opacity=".62" stroke-width=".7"/>
<path d="M405.0 143.7C403.8 145.8 400.5 151.6 398.0 156.0C395.5 160.4 391.3 167.7 390.0 170.0" fill="none" stroke="#fff" stroke-opacity=".62" stroke-width=".7"/>
<path d="M424.0 143.7C424.7 144.8 426.3 147.8 428.0 150.0C429.7 152.2 433.0 155.8 434.0 157.0" fill="none" stroke="#fff" stroke-opacity=".62" stroke-width=".7"/>
<path d="M207.0 236.0C205.2 236.7 199.5 238.2 196.0 240.0C192.5 241.8 187.7 245.8 186.0 247.0" fill="none" stroke="#fff" stroke-opacity=".62" stroke-width=".7"/>
<path d="M239.0 239.0C240.8 239.7 246.2 241.7 250.0 243.0C253.8 244.3 260.0 246.3 262.0 247.0" fill="none" stroke="#fff" stroke-opacity=".62" stroke-width=".7"/>
<path d="M300.0 214.0C301.7 215.7 307.0 220.3 310.0 224.0C313.0 227.7 316.7 234.0 318.0 236.0" fill="none" stroke="#fff" stroke-opacity=".62" stroke-width=".7"/>
<path d="M199.0 261.5C201.3 261.2 209.5 259.5 213.0 259.5C216.5 259.5 218.8 261.2 220.0 261.5" fill="none" stroke="#fff" stroke-opacity=".62" stroke-width=".7"/>
<path d="M252.5 294.0C255.2 294.4 262.2 296.4 268.8 296.4C275.4 296.4 288.1 294.4 292.0 294.0" fill="none" stroke="#fff" stroke-opacity=".62" stroke-width=".7"/>
<path d="M196.0 303.0C197.5 304.5 202.7 308.5 205.0 312.0C207.3 315.5 209.2 320.0 210.0 324.0C210.8 328.0 210.0 334.0 210.0 336.0" fill="none" stroke="#fff" stroke-opacity=".62" stroke-width=".7"/>
<path d="M409.2 347.9C411.1 348.2 417.6 348.6 420.9 349.8C424.2 351.0 426.5 353.5 429.0 354.9C431.5 356.3 433.1 358.4 436.0 358.4C438.9 358.4 442.9 356.4 446.4 354.9C449.9 353.3 455.1 350.1 456.9 349.1" fill="none" stroke="#fff" stroke-opacity=".62" stroke-width=".7"/>
<path d="M390.6 324.7C392.6 326.2 399.2 330.5 402.3 334.0C405.4 337.5 408.1 343.7 409.2 345.6" fill="none" stroke="#fff" stroke-opacity=".62" stroke-width=".7"/>
<path d="M459.2 350.2C460.6 351.4 464.5 356.4 467.4 357.2C470.3 358.0 475.1 355.3 476.7 354.9" fill="none" stroke="#fff" stroke-opacity=".62" stroke-width=".7"/>
<path d="M246.3 176.2C245.6 177.2 243.7 180.3 242.0 182.0C240.3 183.7 238.3 185.5 236.0 186.5C233.7 187.5 229.3 187.8 228.0 188.0" fill="none" stroke="#fff" stroke-opacity=".62" stroke-width=".7"/>
<path d="M246.3 176.2 L250.0 178.5" fill="none" stroke="#fff" stroke-opacity=".62" stroke-width=".7"/>
<path d="M146.5 143.7C147.2 144.7 149.8 147.9 150.9 149.9C152.1 151.9 152.6 153.8 153.4 155.9C154.2 158.1 155.1 161.1 156.0 162.8C156.9 164.5 158.2 165.6 158.6 166.2" fill="none" stroke="#f0d175" stroke-width="1" stroke-linecap="round" stroke-linejoin="round"/>
<path d="M158.6 166.2C158.2 167.8 157.3 172.7 156.0 175.7C154.7 178.7 152.1 181.4 150.9 184.3C149.8 187.2 149.1 190.3 149.1 192.9C149.1 195.5 151.6 197.4 150.9 199.8C150.2 202.2 147.0 205.6 144.8 207.6C142.6 209.6 140.3 210.3 137.9 211.9C135.5 213.5 132.2 215.8 130.2 217.0C128.2 218.2 127.8 217.6 125.9 218.9C124.0 220.2 120.2 223.9 119.0 224.9" fill="none" stroke="#f0d175" stroke-width="1" stroke-linecap="round" stroke-linejoin="round"/>
<path d="M158.6 166.2C160.3 166.1 166.0 166.4 168.9 165.4C171.8 164.4 173.2 162.2 175.8 160.2C178.4 158.2 181.8 155.0 184.4 153.3C187.0 151.6 189.6 151.5 191.3 149.9C193.0 148.3 194.2 144.7 194.8 143.7" fill="none" stroke="#f0d175" stroke-width="1" stroke-linecap="round" stroke-linejoin="round"/>
<path d="M168.9 165.4C170.1 166.6 173.8 169.4 175.8 172.3C177.8 175.2 179.0 179.9 181.0 182.6C183.0 185.3 186.2 186.6 187.9 188.6C189.6 190.6 190.3 192.8 191.3 194.7C192.3 196.6 193.5 199.0 193.9 199.8" fill="none" stroke="#f0d175" stroke-width="1" stroke-linecap="round" stroke-linejoin="round"/>
<path d="M193.9 199.0C194.9 197.7 198.3 194.8 199.9 191.2C201.5 187.6 202.5 181.1 203.4 177.4C204.3 173.7 203.7 171.7 205.1 168.8C206.5 165.9 209.7 162.8 212.0 160.2C214.3 157.6 217.2 154.7 218.9 153.3C220.6 151.9 221.7 151.9 222.3 151.6" fill="none" stroke="#f0d175" stroke-width="1" stroke-linecap="round" stroke-linejoin="round"/>
<path d="M222.3 151.6C223.2 152.8 225.8 156.3 227.5 158.5C229.2 160.7 230.8 163.3 232.3 165.0C233.8 166.7 235.1 167.6 236.5 168.8C237.9 170.0 239.1 171.2 240.7 172.0C242.3 172.8 244.4 173.6 246.3 173.7C248.2 173.8 250.1 172.7 252.0 172.3C253.9 171.9 254.9 171.4 257.9 171.2C260.9 171.0 266.3 171.1 270.0 171.2C273.7 171.3 277.7 171.2 280.3 171.8C282.9 172.4 282.9 173.8 285.5 174.9C288.1 176.0 292.5 176.5 295.8 178.3C299.1 180.2 303.0 183.7 305.3 186.0C307.6 188.3 307.2 190.4 309.6 192.1C312.0 193.8 317.0 195.1 319.9 196.4C322.8 197.7 324.2 197.7 326.8 199.8C329.4 202.0 333.1 206.7 335.4 209.3C337.7 211.9 338.3 214.3 340.6 215.3C342.9 216.3 346.3 214.8 349.2 215.4C352.1 216.0 356.4 218.3 357.8 218.9" fill="none" stroke="#f4cd6c" stroke-width="1.8" stroke-linecap="round" stroke-linejoin="round"/>
<path d="M144.0 207.6C145.6 207.4 150.1 206.6 153.4 206.7C156.7 206.8 160.4 208.3 163.8 208.4C167.2 208.5 171.2 207.0 174.1 207.0C177.0 207.0 179.0 208.2 181.0 208.4C183.0 208.6 185.2 208.1 186.0 208.0" fill="none" stroke="#f0d175" stroke-width="1" stroke-linecap="round" stroke-linejoin="round"/>
<path d="M322.5 143.7C322.2 146.2 320.7 153.4 320.8 158.5C320.9 163.6 322.9 168.3 323.4 174.0C323.9 179.7 324.3 188.3 323.7 192.9C323.1 197.5 320.8 199.5 319.9 201.5C319.0 203.5 317.9 203.3 318.2 205.0C318.5 206.7 320.7 209.9 321.6 211.9C322.5 213.9 323.0 213.0 323.4 217.0C323.8 221.0 324.1 232.9 324.2 236.1" fill="none" stroke="#f0d175" stroke-width="1" stroke-linecap="round" stroke-linejoin="round"/>
<path d="M371.9 143.7C372.6 145.9 374.9 152.3 376.2 156.8C377.5 161.3 378.7 166.6 379.7 170.5C380.7 174.4 380.9 177.4 382.2 180.0C383.5 182.6 385.9 184.0 387.4 186.0C388.8 188.0 390.8 190.1 390.9 192.1C391.0 194.1 388.3 195.4 388.3 198.1C388.3 200.8 390.2 205.2 390.9 208.4C391.6 211.6 392.2 214.7 392.6 217.0C393.0 219.3 393.3 221.4 393.4 222.3" fill="none" stroke="#f0d175" stroke-width="1.1" stroke-linecap="round" stroke-linejoin="round"/>
<path d="M390.9 192.9C393.0 193.9 397.6 197.8 403.8 199.0C410.0 200.2 421.3 199.2 427.9 199.8C434.5 200.4 440.0 202.7 443.4 202.4C446.8 202.1 446.2 199.5 448.5 198.1C450.8 196.7 454.8 194.5 457.1 193.8C459.4 193.1 461.4 193.8 462.3 193.8" fill="none" stroke="#f0d175" stroke-width="1" stroke-linecap="round" stroke-linejoin="round"/>
<path d="M458.9 193.8C457.8 194.8 454.6 197.4 452.0 199.8C449.4 202.2 445.7 206.1 443.4 208.4C441.1 210.7 439.2 211.8 438.2 213.6C437.2 215.3 439.0 216.9 437.3 218.9C435.6 220.9 430.6 223.8 427.9 225.8C425.2 227.8 422.1 230.1 421.0 230.9" fill="none" stroke="#f4cd6c" stroke-width="1.8" stroke-linecap="round" stroke-linejoin="round"/>
<path d="M462.3 194.7C462.6 195.5 462.6 198.1 464.0 199.8C465.4 201.5 469.2 203.0 470.9 205.0C472.6 207.0 473.7 209.9 474.4 211.9C475.1 213.9 475.6 215.0 475.2 217.0C474.8 219.0 472.5 222.8 472.0 224.0" fill="none" stroke="#f0d175" stroke-width="1" stroke-linecap="round" stroke-linejoin="round"/>
<path d="M194.8 225.0C195.5 224.7 196.8 222.6 199.1 223.2C201.4 223.8 206.2 226.2 208.5 228.4C210.8 230.6 211.8 233.1 212.8 236.1C213.8 239.1 213.9 243.2 214.6 246.4C215.3 249.6 216.1 252.1 217.1 255.0C218.1 257.9 220.0 262.2 220.6 263.7" fill="none" stroke="#f0d175" stroke-width="1" stroke-linecap="round" stroke-linejoin="round"/>
<path d="M220.6 264.5C219.2 265.8 214.6 270.0 212.0 272.3C209.4 274.6 207.4 276.0 205.1 278.3C202.8 280.6 198.8 285.6 198.2 286.0C197.6 286.4 201.0 281.8 201.6 281.0" fill="none" stroke="#f0d175" stroke-width="1" stroke-linecap="round" stroke-linejoin="round"/>
<path d="M224.0 267.1C225.2 268.8 228.6 274.5 230.9 277.4C233.2 280.3 236.5 283.0 237.8 284.3C239.2 285.6 236.5 283.7 239.0 285.3C241.5 286.9 248.5 290.9 252.8 293.9C257.1 296.9 261.1 299.8 264.8 303.4C268.5 307.0 271.8 311.7 275.2 315.4C278.6 319.1 281.8 322.9 285.5 325.8C289.2 328.7 293.8 331.7 297.5 332.7C301.2 333.7 304.7 331.5 307.9 331.8C311.1 332.1 313.6 334.1 316.5 334.4C319.4 334.7 323.7 333.6 325.1 333.5" fill="none" stroke="#f0d175" stroke-width="1" stroke-linecap="round" stroke-linejoin="round"/>
<path d="M225.7 261.9C226.8 261.5 230.4 260.6 232.6 259.3C234.8 258.0 236.2 256.3 239.0 254.2C241.8 252.0 245.6 247.4 249.3 246.4C253.0 245.4 255.9 248.5 261.4 248.2C266.8 247.9 276.6 244.6 282.0 244.7C287.4 244.8 289.2 247.6 294.1 249.0C299.0 250.4 308.4 252.6 311.3 253.3" fill="none" stroke="#f0d175" stroke-width="1" stroke-linecap="round" stroke-linejoin="round"/>
<path d="M311.3 253.3C312.4 251.4 316.1 245.0 318.2 242.1C320.3 239.2 322.2 238.8 324.2 236.1C326.2 233.4 328.7 228.4 330.3 225.8C331.9 223.2 332.6 221.8 333.7 220.6C334.8 219.4 336.5 219.2 337.1 218.9" fill="none" stroke="#f0d175" stroke-width="1" stroke-linecap="round" stroke-linejoin="round"/>
<path d="M310.5 255.0C310.1 256.7 308.6 261.7 307.9 265.4C307.2 269.1 306.2 274.0 306.1 277.4C306.0 280.8 306.6 284.1 307.0 286.0C307.4 287.9 308.4 288.2 308.7 288.7" fill="none" stroke="#f0d175" stroke-width="1" stroke-linecap="round" stroke-linejoin="round"/>
<path d="M357.8 218.9C359.7 219.8 365.4 223.4 369.3 224.0C373.2 224.6 377.7 222.4 381.4 222.3C385.1 222.2 388.0 222.3 391.7 223.2C395.4 224.1 399.5 226.2 403.8 227.5C408.1 228.8 413.5 229.6 417.5 230.9C421.5 232.2 425.0 233.5 427.9 235.2C430.8 236.9 432.5 239.4 434.8 241.3C437.1 243.2 440.0 244.1 441.6 246.4C443.2 248.7 443.9 252.1 444.2 255.0C444.5 257.9 443.5 262.2 443.4 263.7" fill="none" stroke="#f4cd6c" stroke-width="2.2" stroke-linecap="round" stroke-linejoin="round"/>
<path d="M391.7 212.0 L393.4 222.3" fill="none" stroke="#f0d175" stroke-width="1" stroke-linecap="round" stroke-linejoin="round"/>
<path d="M438.2 212.0C438.1 213.2 437.6 216.0 437.3 218.9C437.0 221.8 436.8 226.0 436.5 229.2C436.2 232.3 435.8 236.4 435.6 237.8" fill="none" stroke="#f0d175" stroke-width="1" stroke-linecap="round" stroke-linejoin="round"/>
<path d="M400.3 234.4 L419.3 233.5" fill="none" stroke="#f0d175" stroke-width="1" stroke-linecap="round" stroke-linejoin="round"/>
<path d="M398.6 229.2C398.9 230.1 399.9 232.1 400.3 234.4C400.7 236.7 400.3 240.1 401.2 243.0C402.1 245.9 405.4 249.0 405.5 251.6C405.6 254.2 403.1 256.5 402.0 258.5C400.9 260.5 399.1 260.9 398.6 263.7C398.1 266.4 399.0 272.1 399.0 275.0C399.0 277.9 399.0 278.0 398.6 281.0C398.2 284.0 397.2 291.1 396.9 293.1" fill="none" stroke="#f0d175" stroke-width="1" stroke-linecap="round" stroke-linejoin="round"/>
<path d="M396.9 244.7C398.6 244.1 404.0 243.0 407.2 241.3C410.4 239.6 414.4 235.6 415.8 234.4" fill="none" stroke="#f0d175" stroke-width="1" stroke-linecap="round" stroke-linejoin="round"/>
<path d="M396.9 256.8C398.6 256.2 402.6 254.2 407.2 253.3C411.8 252.4 419.5 251.6 424.4 251.6C429.3 251.6 433.4 252.4 436.5 253.3C439.6 254.2 441.9 256.4 443.0 257.0" fill="none" stroke="#f0d175" stroke-width="1" stroke-linecap="round" stroke-linejoin="round"/>
<path d="M443.4 263.7C442.0 264.6 436.8 266.8 434.8 268.8C432.8 270.8 432.5 272.8 431.3 275.7C430.1 278.6 429.0 283.4 427.9 286.0C426.8 288.6 426.4 289.4 424.4 291.3C422.4 293.2 419.2 296.4 415.8 297.4C412.4 298.4 407.0 298.0 403.8 297.4C400.6 296.8 399.5 294.6 396.9 293.9C394.3 293.2 391.1 293.1 388.0 293.0C384.9 292.9 381.0 292.2 378.0 293.0C375.0 293.8 372.2 296.2 370.0 297.5C367.8 298.8 367.2 300.3 365.0 300.5C362.8 300.7 359.8 299.2 357.0 298.5C354.2 297.8 351.0 296.5 348.0 296.0C345.0 295.5 341.8 295.7 339.0 295.5C336.2 295.3 333.0 295.4 331.0 295.0C329.0 294.6 329.2 293.4 326.8 293.1C324.4 292.8 319.4 292.4 316.5 293.1C313.6 293.8 310.8 296.7 309.6 297.4" fill="none" stroke="#f4cd6c" stroke-width="2" stroke-linecap="round" stroke-linejoin="round"/>
<path d="M443.4 263.7C445.4 263.7 451.1 264.0 455.4 263.7C459.7 263.4 465.1 261.0 469.2 261.9C473.3 262.8 478.2 267.6 480.0 268.8" fill="none" stroke="#f0d175" stroke-width="1" stroke-linecap="round" stroke-linejoin="round"/>
<path d="M445.1 248.2C446.8 246.5 451.4 241.0 455.4 237.8C459.4 234.6 465.1 231.8 469.2 229.2C473.3 226.6 478.2 223.5 480.0 222.3" fill="none" stroke="#f0d175" stroke-width="1" stroke-linecap="round" stroke-linejoin="round"/>
<path d="M448.5 255.0C450.2 254.4 455.4 253.0 458.9 251.6C462.3 250.2 465.7 247.3 469.2 246.4C472.7 245.5 478.2 246.4 480.0 246.4" fill="none" stroke="#f0d175" stroke-width="1" stroke-linecap="round" stroke-linejoin="round"/>
<path d="M445.1 267.1C445.7 268.8 447.6 274.2 448.5 277.4C449.4 280.5 450.2 284.2 450.3 286.0C450.4 287.8 450.0 285.9 449.4 287.9C448.8 289.9 447.1 293.6 446.8 298.2C446.5 302.8 446.6 310.5 447.7 315.4C448.8 320.3 452.0 323.5 453.7 327.5C455.4 331.5 457.4 334.9 458.0 339.5C458.6 344.1 457.1 353.2 457.1 355.0C457.1 356.8 457.9 350.8 458.0 350.0" fill="none" stroke="#f0d175" stroke-width="1" stroke-linecap="round" stroke-linejoin="round"/>
<path d="M455.4 263.7C457.2 265.4 463.1 271.8 466.0 274.0C468.9 276.2 470.7 277.3 473.0 277.0C475.3 276.7 478.8 272.8 480.0 272.0" fill="none" stroke="#f0d175" stroke-width="1" stroke-linecap="round" stroke-linejoin="round"/>
<path d="M455.4 291.3C456.3 292.7 458.3 295.3 460.6 299.9C462.9 304.5 467.1 314.0 469.2 318.9C471.3 323.8 472.9 326.0 473.5 329.2C474.1 332.4 472.2 335.2 472.6 337.8C473.0 340.4 475.4 343.8 476.0 345.0" fill="none" stroke="#f0d175" stroke-width="1" stroke-linecap="round" stroke-linejoin="round"/>
<path d="M448.5 281.0 L455.4 291.3" fill="none" stroke="#f0d175" stroke-width="1" stroke-linecap="round" stroke-linejoin="round"/>
<path d="M309.6 297.4C307.3 297.0 301.5 294.9 295.8 294.8C290.1 294.7 280.4 295.1 275.2 296.5C270.0 297.9 269.1 301.2 264.8 303.4C260.5 305.5 253.6 307.1 249.3 309.4C245.0 311.7 242.3 315.0 239.0 317.2C235.7 319.4 232.8 320.9 229.2 322.3C225.5 323.7 220.2 323.5 217.1 325.8C213.9 328.1 212.9 333.2 210.3 336.1C207.7 339.0 204.2 341.3 201.6 343.0C199.0 344.7 197.1 346.5 194.8 346.4C192.5 346.2 191.1 343.0 187.9 342.1C184.7 341.2 179.0 342.6 175.8 341.3C172.6 340.0 170.1 335.5 168.9 334.4" fill="none" stroke="#f0d175" stroke-width="1" stroke-linecap="round" stroke-linejoin="round"/>
<path d="M275.2 315.4C275.3 317.1 275.7 321.5 276.0 325.8C276.3 330.1 276.9 336.4 276.9 341.3C276.9 346.2 276.0 352.3 276.0 355.0C276.0 357.7 277.0 356.7 276.9 357.7C276.8 358.7 275.5 360.6 275.2 361.2" fill="none" stroke="#f0d175" stroke-width="1" stroke-linecap="round" stroke-linejoin="round"/>
<path d="M308.7 288.7C309.1 290.1 309.4 294.4 311.3 297.4C313.2 300.4 317.8 303.2 319.9 306.8C322.0 310.4 323.3 314.6 324.2 318.9C325.1 323.2 325.0 330.4 325.1 332.7" fill="none" stroke="#f0d175" stroke-width="1" stroke-linecap="round" stroke-linejoin="round"/>
<path d="M328.5 331.8C330.2 330.5 335.4 326.1 338.9 324.0C342.3 321.9 345.8 320.6 349.2 318.9C352.6 317.2 356.8 315.1 359.0 313.7C361.2 312.3 361.8 310.9 362.4 310.3" fill="none" stroke="#f0d175" stroke-width="1" stroke-linecap="round" stroke-linejoin="round"/>
<path d="M328.5 336.1C330.8 337.5 338.3 342.1 342.3 344.7C346.3 347.3 349.8 350.0 352.6 351.6C355.4 353.2 356.8 352.2 359.0 354.2C361.2 356.2 363.3 361.4 365.9 363.8C368.5 366.2 373.1 368.0 374.5 368.9" fill="none" stroke="#f0d175" stroke-width="1" stroke-linecap="round" stroke-linejoin="round"/>
<path d="M324.2 336.1C322.6 337.2 318.1 341.1 314.8 343.0C311.5 344.9 307.9 346.1 304.4 347.3C300.9 348.5 296.8 348.6 293.7 350.0C290.6 351.4 288.4 354.0 285.5 355.8C282.6 357.6 277.8 360.1 276.2 361.0" fill="none" stroke="#f0d175" stroke-width="1" stroke-linecap="round" stroke-linejoin="round"/>
<path d="M421.8 286.2C421.1 288.2 419.4 293.9 417.5 298.2C415.6 302.5 413.3 308.3 410.7 312.0C408.1 315.7 405.4 317.2 402.0 320.6C398.6 324.1 393.1 329.2 390.0 332.7C386.9 336.1 384.5 338.4 383.1 341.3C381.7 344.2 382.0 346.8 381.4 350.0C380.8 353.2 380.4 357.2 379.7 360.3C379.0 363.4 377.7 365.4 377.1 368.9C376.5 372.3 376.4 379.0 376.2 381.0" fill="none" stroke="#f0d175" stroke-width="1.2" stroke-linecap="round" stroke-linejoin="round"/>
<path d="M362.4 310.3C361.8 311.1 358.7 312.2 359.0 315.4C359.3 318.5 362.5 325.5 364.2 329.2C365.9 332.9 368.1 333.5 369.3 337.8C370.5 342.1 370.8 351.2 371.1 355.0C371.4 358.8 370.2 358.0 371.1 360.3C372.0 362.6 375.4 367.5 376.2 368.9" fill="none" stroke="#f0d175" stroke-width="1" stroke-linecap="round" stroke-linejoin="round"/>
<path d="M376.2 381.0C376.2 382.7 376.3 387.9 376.2 391.3C376.1 394.8 375.8 398.5 375.4 401.7C375.0 404.9 374.6 407.6 373.6 410.3C372.6 413.0 371.2 416.4 369.3 418.0C367.4 419.6 363.5 419.7 362.4 420.0" fill="none" stroke="#f4cd6c" stroke-width="1.4" stroke-linecap="round" stroke-linejoin="round"/>
<path d="M377.9 384.4C378.5 385.8 379.4 390.4 381.4 393.0C383.4 395.6 388.6 398.8 390.0 399.9" fill="none" stroke="#f0d175" stroke-width="1" stroke-linecap="round" stroke-linejoin="round"/>
<path d="M458.0 350.0C457.9 351.1 457.7 355.2 457.1 356.9C456.5 358.6 455.9 358.4 454.6 360.3C453.3 362.2 450.3 366.8 449.4 368.1" fill="none" stroke="#f0d175" stroke-width="1" stroke-linecap="round" stroke-linejoin="round"/>
<path d="M119.0 298.2C121.6 298.2 130.8 296.8 134.5 298.2C138.2 299.6 138.5 304.2 141.4 306.8C144.3 309.4 148.8 310.8 151.7 313.7C154.6 316.6 156.3 320.6 158.6 324.0C160.9 327.4 164.3 332.7 165.5 334.4" fill="none" stroke="#f0d175" stroke-width="1" stroke-linecap="round" stroke-linejoin="round"/>
<path d="M168.9 332.7C169.1 329.8 169.8 321.1 169.8 315.4C169.8 309.6 167.3 301.9 168.9 298.2C170.5 294.5 176.7 294.5 179.3 293.1C181.9 291.7 181.5 290.8 184.4 289.6C187.3 288.5 193.6 287.6 196.5 286.2C199.4 284.8 200.8 281.9 201.6 281.0" fill="none" stroke="#f0d175" stroke-width="1" stroke-linecap="round" stroke-linejoin="round"/>
<path d="M165.5 336.1C163.5 337.2 156.3 341.3 153.4 343.0C150.5 344.7 152.3 345.7 148.3 346.4C144.3 347.1 134.2 346.7 129.3 347.3C124.4 347.9 120.7 349.5 119.0 349.9" fill="none" stroke="#f0d175" stroke-width="1" stroke-linecap="round" stroke-linejoin="round"/>
<path d="M164.6 337.8C165.0 339.2 166.6 344.4 167.2 346.4C167.8 348.4 167.9 348.2 168.1 350.0C168.2 351.8 166.8 353.8 168.1 356.9C169.4 360.0 173.1 364.6 175.8 368.9C178.5 373.2 181.8 379.0 184.4 382.7C187.0 386.4 189.3 388.1 191.3 391.3C193.3 394.5 194.5 398.8 196.5 401.7C198.5 404.6 201.2 406.6 203.4 408.5C205.6 410.4 208.2 411.0 209.4 412.9C210.6 414.8 210.2 418.8 210.3 420.0" fill="none" stroke="#f0d175" stroke-width="1" stroke-linecap="round" stroke-linejoin="round"/>
<path d="M194.8 346.4 L196.5 355.0" fill="none" stroke="#f0d175" stroke-width="1" stroke-linecap="round" stroke-linejoin="round"/>
<path d="M156.9 372.4C156.6 374.7 154.3 382.3 155.2 386.2C156.0 390.1 158.8 393.9 162.0 395.6C165.2 397.3 170.4 394.9 174.1 396.5C177.8 398.1 180.7 404.1 184.4 405.1C188.1 406.1 194.5 402.9 196.5 402.5" fill="none" stroke="#f0d175" stroke-width="1" stroke-linecap="round" stroke-linejoin="round"/>
<path d="M209.4 412.9C209.8 410.7 210.4 403.8 212.0 399.9C213.6 396.0 216.0 392.8 218.9 389.6C221.8 386.5 225.8 383.3 229.2 381.0C232.5 378.7 235.7 377.8 239.0 375.8C242.3 373.8 245.6 370.9 249.3 368.9C253.0 366.9 257.1 365.1 261.4 363.8C265.7 362.5 272.9 361.6 275.2 361.2" fill="none" stroke="#f0d175" stroke-width="1" stroke-linecap="round" stroke-linejoin="round"/>
<path d="M275.2 361.2C276.3 361.3 279.4 361.6 282.0 362.0C284.6 362.4 288.1 361.5 290.7 363.8C293.3 366.1 294.9 371.5 297.5 375.8C300.1 380.1 303.5 385.7 306.1 389.6C308.7 393.5 311.0 396.2 313.0 399.1C315.0 402.0 317.2 403.3 318.2 406.8C319.2 410.3 319.0 417.8 319.1 420.0" fill="none" stroke="#f0d175" stroke-width="1" stroke-linecap="round" stroke-linejoin="round"/>
<path d="M313.0 399.1C315.0 400.8 321.4 406.7 325.1 409.4C328.8 412.1 331.4 413.6 335.4 415.4C339.4 417.2 346.9 419.2 349.2 420.0" fill="none" stroke="#f0d175" stroke-width="1" stroke-linecap="round" stroke-linejoin="round"/>
<path d="M349.2 350.0 L359.0 355.2" fill="none" stroke="#f0d175" stroke-width="1" stroke-linecap="round" stroke-linejoin="round"/>
<path d="M443.4 263.7C442.8 265.1 441.3 269.4 439.9 272.3C438.5 275.2 435.9 278.6 434.8 280.9C433.7 283.2 433.3 285.1 433.0 286.0" fill="none" stroke="#f0d175" stroke-width="1" stroke-linecap="round" stroke-linejoin="round"/>
<path d="M434.8 241.3C434.2 242.7 431.6 247.0 431.3 249.9C431.0 252.8 432.4 256.2 433.0 258.5C433.6 260.8 434.5 262.8 434.8 263.7" fill="none" stroke="#f0d175" stroke-width="1" stroke-linecap="round" stroke-linejoin="round"/>
<path d="M469.2 229.2C469.8 227.5 471.5 221.8 472.6 218.9C473.8 216.0 475.5 213.2 476.1 212.0" fill="none" stroke="#f0d175" stroke-width="1" stroke-linecap="round" stroke-linejoin="round"/>
<path d="M448.8 276.7C449.9 278.2 453.8 282.1 455.7 286.0C457.6 289.9 459.6 297.7 460.4 300.0" fill="none" stroke="#f0d175" stroke-width="1" stroke-linecap="round" stroke-linejoin="round"/>
<path d="M455.7 265.0C458.4 265.8 468.1 267.9 472.0 269.8C475.9 271.8 477.8 275.6 479.0 276.7" fill="none" stroke="#f0d175" stroke-width="1" stroke-linecap="round" stroke-linejoin="round"/>
<path d="M446.4 246.5 L452.0 251.0" fill="none" stroke="#f0d175" stroke-width="1" stroke-linecap="round" stroke-linejoin="round"/>
<path d="M248 218.5L259.8 213.2" stroke="#8fb8f4" stroke-width=".6" stroke-dasharray="1.6 .8" stroke-opacity=".8"/>
<path d="M208.2 161.0C207.9 161.8 208.0 164.2 206.6 165.6C205.2 167.0 201.2 167.5 200.0 169.5C198.8 171.5 199.0 174.7 199.2 177.4C199.3 180.2 201.1 183.4 200.9 186.0C200.8 188.6 199.4 190.8 198.3 192.9C197.2 195.0 195.1 197.6 194.5 198.5" fill="none" stroke="#7fa9ee" stroke-width="1.5"/>
<path d="M208.5 143.7L206.0 149.9L207.7 155.9L206.0 165.4L199.0 168.8L198.2 177.4L199.9 186.0L197.3 192.9L193.0 199.8L187.0 208.0L184.4 218.9L185.3 222.3L177.5 223.2L170.7 220.6L165.5 222.3L158.6 228.4L150.0 233.5L141.4 226.6L136.2 224.9L131.1 230.9L122.4 235.2L124.2 243.0L131.1 248.2L133.6 253.3L139.7 251.6L144.8 255.0L150.0 257.6L156.0 254.2L157.7 257.6L152.0 266.0L146.5 267.1L141.4 268.8L137.9 276.6L129.3 280.0L119.0 280.9" fill="none" stroke="#5d6a66" stroke-width=".7" stroke-linejoin="round"/>
<path d="M119.0 346.0L124.0 348.5L130.2 350.0L131.9 367.2L139.7 372.4L150.0 371.5L159.5 371.5L160.3 376.7L168.9 381.9L170.7 389.6L177.5 390.5L181.8 393.9L187.9 392.2L193.0 394.8L194.8 390.5L200.8 385.3L204.2 386.2L202.5 390.5L208.5 391.3L209.4 394.8L215.4 393.0L218.0 396.5L222.3 395.6L229.2 387.0L232.6 379.3L229.2 374.1L232.6 368.9L239.0 367.2L246.7 365.5L245.9 353.4L243.3 355.0L241.6 346.4L240.7 339.5L242.4 336.1L249.3 332.7L253.6 328.3L257.9 322.3L261.4 315.4L265.7 312.9L270.0 315.4L274.3 316.3L278.6 319.7L282.0 324.0L287.2 330.9L292.4 337.8L294.1 348.1L290.7 350.0L295.8 355.2L299.3 363.8L306.1 372.4L313.0 377.5L319.9 374.1L326.8 378.4L329.4 384.4L326.8 394.8L325.1 403.4L328.5 406.8L325.1 410.3L330.3 418.0L335.4 415.4L342.3 413.7L352.6 410.3L359.0 412.0L367.6 410.3L371.9 406.8L372.8 398.2L377.1 397.3L379.7 401.7L384.8 397.3L390.0 399.9" fill="none" stroke="#5d6a66" stroke-width=".7" stroke-linejoin="round"/>
<path d="M217.5 391.5L220.0 388.0L225.0 385.5L226.5 388.0L223.0 391.5L219.0 394.0L217.5 391.5" fill="none" stroke="#5d6a66" stroke-width=".7" stroke-linejoin="round"/>
<path d="M119.0 380.0C120.8 381.7 126.5 387.0 130.0 390.0C133.5 393.0 136.3 395.7 140.0 398.0C143.7 400.3 148.7 402.0 152.0 404.0C155.3 406.0 157.3 407.4 160.0 410.0C162.7 412.6 166.7 418.1 168.0 419.7" fill="none" stroke="#6d7a76" stroke-width=".5" stroke-dasharray="1 1.2" stroke-opacity=".8"/>
<path d="M239.0 403.4C240.7 403.7 246.4 405.4 249.3 405.1C252.2 404.8 253.3 402.3 256.2 401.7C259.1 401.1 264.5 400.8 266.5 401.7C268.5 402.6 267.2 404.8 268.3 406.8C269.4 408.8 271.4 411.6 273.4 413.7C275.4 415.8 279.1 418.7 280.3 419.7" fill="none" stroke="#6d7a76" stroke-width=".5" stroke-dasharray="1 1.2" stroke-opacity=".8"/>
<circle cx="152.6" cy="164" r=".9" fill="#fff" stroke="#5f676c" stroke-width=".55"/>
<circle cx="221.4" cy="152" r=".9" fill="#fff" stroke="#5f676c" stroke-width=".55"/>
<circle cx="144" cy="208" r=".9" fill="#fff" stroke="#5f676c" stroke-width=".55"/>
<circle cx="195.6" cy="199.8" r=".9" fill="#fff" stroke="#5f676c" stroke-width=".55"/>
<circle cx="385.5" cy="189.5" r=".9" fill="#fff" stroke="#5f676c" stroke-width=".55"/>
<circle cx="333" cy="221" r=".9" fill="#fff" stroke="#5f676c" stroke-width=".55"/>
<circle cx="220.8" cy="264" r=".9" fill="#fff" stroke="#5f676c" stroke-width=".55"/>
<circle cx="311.4" cy="254" r=".9" fill="#fff" stroke="#5f676c" stroke-width=".55"/>
<circle cx="308.7" cy="288.7" r=".9" fill="#fff" stroke="#5f676c" stroke-width=".55"/>
<circle cx="398.3" cy="230.3" r=".9" fill="#fff" stroke="#5f676c" stroke-width=".55"/>
<circle cx="443.3" cy="263.6" r=".9" fill="#fff" stroke="#5f676c" stroke-width=".55"/>
<circle cx="422" cy="286.6" r=".9" fill="#fff" stroke="#5f676c" stroke-width=".55"/>
<circle cx="166.6" cy="333.7" r=".9" fill="#fff" stroke="#5f676c" stroke-width=".55"/>
<circle cx="198.6" cy="359.6" r=".9" fill="#fff" stroke="#5f676c" stroke-width=".55"/>
<circle cx="325.2" cy="334" r=".9" fill="#fff" stroke="#5f676c" stroke-width=".55"/>
<circle cx="362" cy="311" r=".9" fill="#fff" stroke="#5f676c" stroke-width=".55"/>
<circle cx="449.2" cy="368.5" r=".9" fill="#fff" stroke="#5f676c" stroke-width=".55"/>
<circle cx="376.3" cy="381.3" r=".9" fill="#fff" stroke="#5f676c" stroke-width=".55"/>
<rect x="257.8" y="167.8" width="8.3" height="6.9" rx=".8" fill="#5f9d33"/>
<text x="261.95" y="173.15" font-size="5.3" font-weight="bold" text-anchor="middle" fill="#f4e36b">A6</text>
<rect x="315.6" y="193" width="8.2" height="6.9" rx=".8" fill="#5f9d33"/>
<text x="319.70000000000005" y="198.35" font-size="5.3" font-weight="bold" text-anchor="middle" fill="#f4e36b">A6</text>
<rect x="421.8" y="232.3" width="10.4" height="6.9" rx=".8" fill="#6678d2"/>
<text x="427.0" y="237.65" font-size="5.3" font-weight="bold" text-anchor="middle" fill="#fff">M2</text>
<rect x="409.3" y="293" width="9.1" height="6" rx=".8" fill="#6678d2"/>
<text x="413.85" y="297.9" font-size="5.3" font-weight="bold" text-anchor="middle" fill="#fff">M1</text>
<text x="152.5" y="161.9" font-size="6.3" text-anchor="middle" fill="#5f6569" stroke="#fff" stroke-opacity=".7" stroke-width="1.2" paint-order="stroke" stroke-linejoin="round">Letterkenny</text>
<text x="221" y="149.4" font-size="6.6" text-anchor="middle" fill="#5f6569" stroke="#fff" stroke-opacity=".7" stroke-width="1.2" paint-order="stroke" stroke-linejoin="round">Derry</text>
<text x="143.5" y="207" font-size="6.3" text-anchor="middle" fill="#5f6569" stroke="#fff" stroke-opacity=".7" stroke-width="1.2" paint-order="stroke" stroke-linejoin="round">Ballybofey</text>
<text x="195.5" y="206.4" font-size="6.3" text-anchor="middle" fill="#5f6569" stroke="#fff" stroke-opacity=".7" stroke-width="1.2" paint-order="stroke" stroke-linejoin="round">Strabane</text>
<text x="386" y="186.4" font-size="6.3" text-anchor="middle" fill="#5f6569" stroke="#fff" stroke-opacity=".7" stroke-width="1.2" paint-order="stroke" stroke-linejoin="round">Ballymena</text>
<text x="333.5" y="217.2" font-size="6.1" text-anchor="middle" fill="#5f6569" stroke="#fff" stroke-opacity=".7" stroke-width="1.2" paint-order="stroke" stroke-linejoin="round">Magherafelt</text>
<text x="220.6" y="260.8" font-size="6.5" text-anchor="middle" fill="#5f6569" stroke="#fff" stroke-opacity=".7" stroke-width="1.2" paint-order="stroke" stroke-linejoin="round">Omagh</text>
<text x="311.6" y="248.6" font-size="6.5" text-anchor="middle" fill="#5f6569" stroke="#fff" stroke-opacity=".7" stroke-width="1.2" paint-order="stroke" stroke-linejoin="round">Cookstown</text>
<text x="307.8" y="286.2" font-size="6.3" text-anchor="middle" fill="#5f6569" stroke="#fff" stroke-opacity=".7" stroke-width="1.2" paint-order="stroke" stroke-linejoin="round">Dungannon</text>
<text x="398.2" y="227" font-size="6.3" text-anchor="middle" fill="#5f6569" stroke="#fff" stroke-opacity=".7" stroke-width="1.2" paint-order="stroke" stroke-linejoin="round">Antrim</text>
<text x="443" y="260.7" font-size="7.3" text-anchor="middle" fill="#5f6569" stroke="#fff" stroke-opacity=".7" stroke-width="1.2" paint-order="stroke" stroke-linejoin="round">Belfast</text>
<text x="422" y="283.9" font-size="7" text-anchor="middle" fill="#5f6569" stroke="#fff" stroke-opacity=".7" stroke-width="1.2" paint-order="stroke" stroke-linejoin="round">Lisburn</text>
<text x="460.6" y="272.4" font-size="6.3" text-anchor="start" fill="#5f6569" stroke="#fff" stroke-opacity=".7" stroke-width="1.2" paint-order="stroke" stroke-linejoin="round">Newtownards</text>
<text x="472.6" y="245.2" font-size="6.8" text-anchor="start" fill="#5f6569" stroke="#fff" stroke-opacity=".7" stroke-width="1.2" paint-order="stroke" stroke-linejoin="round">Bangor</text>
<text x="168.8" y="331.8" font-size="6.5" text-anchor="middle" fill="#5f6569" stroke="#fff" stroke-opacity=".7" stroke-width="1.2" paint-order="stroke" stroke-linejoin="round">Enniskillen</text>
<text x="199.2" y="356.6" font-size="5.8" text-anchor="middle" fill="#5f6569" stroke="#fff" stroke-opacity=".7" stroke-width="1.2" paint-order="stroke" stroke-linejoin="round">Lisnaskea</text>
<text x="326.6" y="329.8" font-size="6.8" text-anchor="middle" fill="#5f6569" stroke="#fff" stroke-opacity=".7" stroke-width="1.2" paint-order="stroke" stroke-linejoin="round">Armagh</text>
<text x="358.2" y="310.2" font-size="6.3" text-anchor="middle" fill="#5f6569" stroke="#fff" stroke-opacity=".7" stroke-width="1.2" paint-order="stroke" stroke-linejoin="round">Portadown</text>
<text x="448.8" y="366.8" font-size="6.05" text-anchor="middle" fill="#5f6569" stroke="#fff" stroke-opacity=".7" stroke-width="1.2" paint-order="stroke" stroke-linejoin="round">Newcastle</text>
<text x="376.8" y="378" font-size="6.4" text-anchor="middle" fill="#5f6569" stroke="#fff" stroke-opacity=".7" stroke-width="1.2" paint-order="stroke" stroke-linejoin="round">Newry</text>
<g transform="translate(360.3 163.2)"><ellipse cx="0" cy=".9" rx="4" ry=".9" fill="#3b5a45" fill-opacity=".25"/><path d="M0-.1C-1.5-2.8-4.6-5.8-5.65-8.6A6.3 6.3 0 1 1 5.65-8.6C4.6-5.800 1.5-2.8 0-.1ZM0-13A1.7 1.7 0 1 0 0-9.600A1.7 1.7 0 1 0 0-13Z" fill="#e1444c" fill-rule="evenodd" stroke="#fff" stroke-width="1" stroke-linejoin="round"/><circle cx="0" cy="-11.3" r="2.38" fill="none" stroke="#fff" stroke-width="1.4"/></g>
<g transform="translate(434.8 167.6)"><ellipse cx="0" cy=".9" rx="4" ry=".9" fill="#3b5a45" fill-opacity=".25"/><path d="M0-.1C-1.5-2.8-4.6-5.8-5.65-8.6A6.3 6.3 0 1 1 5.65-8.6C4.6-5.800 1.5-2.8 0-.1ZM0-13A1.7 1.7 0 1 0 0-9.600A1.7 1.7 0 1 0 0-13Z" fill="#e1444c" fill-rule="evenodd" stroke="#fff" stroke-width="1" stroke-linejoin="round"/><circle cx="0" cy="-11.3" r="2.38" fill="none" stroke="#fff" stroke-width="1.4"/></g>
<g transform="translate(230.2 190.3)"><ellipse cx="0" cy=".9" rx="4" ry=".9" fill="#3b5a45" fill-opacity=".25"/><path d="M0-.1C-1.5-2.8-4.6-5.8-5.65-8.6A6.3 6.3 0 1 1 5.65-8.6C4.6-5.800 1.5-2.8 0-.1ZM0-13A1.7 1.7 0 1 0 0-9.600A1.7 1.7 0 1 0 0-13Z" fill="#e1444c" fill-rule="evenodd" stroke="#fff" stroke-width="1" stroke-linejoin="round"/><circle cx="0" cy="-11.3" r="2.38" fill="none" stroke="#fff" stroke-width="1.4"/></g>
<g transform="translate(299.1 191.3)"><ellipse cx="0" cy=".9" rx="4" ry=".9" fill="#3b5a45" fill-opacity=".25"/><path d="M0-.1C-1.5-2.8-4.6-5.8-5.65-8.6A6.3 6.3 0 1 1 5.65-8.6C4.6-5.800 1.5-2.8 0-.1ZM0-13A1.7 1.7 0 1 0 0-9.600A1.7 1.7 0 1 0 0-13Z" fill="#e1444c" fill-rule="evenodd" stroke="#fff" stroke-width="1" stroke-linejoin="round"/><circle cx="0" cy="-11.3" r="2.38" fill="none" stroke="#fff" stroke-width="1.4"/></g>
<g transform="translate(186.1 217.7)"><ellipse cx="0" cy=".9" rx="4" ry=".9" fill="#3b5a45" fill-opacity=".25"/><path d="M0-.1C-1.5-2.8-4.6-5.8-5.65-8.6A6.3 6.3 0 1 1 5.65-8.6C4.6-5.800 1.5-2.8 0-.1ZM0-13A1.7 1.7 0 1 0 0-9.600A1.7 1.7 0 1 0 0-13Z" fill="#e1444c" fill-rule="evenodd" stroke="#fff" stroke-width="1" stroke-linejoin="round"/><circle cx="0" cy="-11.3" r="2.38" fill="none" stroke="#fff" stroke-width="1.4"/></g>
<g transform="translate(194.95 225.7)"><ellipse cx="0" cy=".9" rx="4" ry=".9" fill="#3b5a45" fill-opacity=".25"/><path d="M0-.1C-1.5-2.8-4.6-5.8-5.65-8.6A6.3 6.3 0 1 1 5.65-8.6C4.6-5.800 1.5-2.8 0-.1ZM0-13A1.7 1.7 0 1 0 0-9.600A1.7 1.7 0 1 0 0-13Z" fill="#e1444c" fill-rule="evenodd" stroke="#fff" stroke-width="1" stroke-linejoin="round"/><circle cx="0" cy="-11.3" r="2.38" fill="none" stroke="#fff" stroke-width="1.4"/></g>
<g transform="translate(238.8 235)"><ellipse cx="0" cy=".9" rx="4" ry=".9" fill="#3b5a45" fill-opacity=".25"/><path d="M0-.1C-1.5-2.8-4.6-5.8-5.65-8.6A6.3 6.3 0 1 1 5.65-8.6C4.6-5.800 1.5-2.8 0-.1ZM0-13A1.7 1.7 0 1 0 0-9.600A1.7 1.7 0 1 0 0-13Z" fill="#e1444c" fill-rule="evenodd" stroke="#fff" stroke-width="1" stroke-linejoin="round"/><circle cx="0" cy="-11.3" r="2.38" fill="none" stroke="#fff" stroke-width="1.4"/></g>
<g transform="translate(274.2 255.1)"><ellipse cx="0" cy=".9" rx="4" ry=".9" fill="#3b5a45" fill-opacity=".25"/><path d="M0-.1C-1.5-2.8-4.6-5.8-5.65-8.6A6.3 6.3 0 1 1 5.65-8.6C4.6-5.800 1.5-2.8 0-.1ZM0-13A1.7 1.7 0 1 0 0-9.600A1.7 1.7 0 1 0 0-13Z" fill="#e1444c" fill-rule="evenodd" stroke="#fff" stroke-width="1" stroke-linejoin="round"/><circle cx="0" cy="-11.3" r="2.38" fill="none" stroke="#fff" stroke-width="1.4"/></g>
<g transform="translate(152 272.3)"><ellipse cx="0" cy=".9" rx="4" ry=".9" fill="#3b5a45" fill-opacity=".25"/><path d="M0-.1C-1.5-2.8-4.6-5.8-5.65-8.6A6.3 6.3 0 1 1 5.65-8.6C4.6-5.800 1.5-2.8 0-.1ZM0-13A1.7 1.7 0 1 0 0-9.600A1.7 1.7 0 1 0 0-13Z" fill="#e1444c" fill-rule="evenodd" stroke="#fff" stroke-width="1" stroke-linejoin="round"/><circle cx="0" cy="-11.3" r="2.38" fill="none" stroke="#fff" stroke-width="1.4"/></g>
<g transform="translate(188.3 299.4)"><ellipse cx="0" cy=".9" rx="4" ry=".9" fill="#3b5a45" fill-opacity=".25"/><path d="M0-.1C-1.5-2.8-4.6-5.8-5.65-8.6A6.3 6.3 0 1 1 5.65-8.6C4.6-5.800 1.5-2.8 0-.1ZM0-13A1.7 1.7 0 1 0 0-9.600A1.7 1.7 0 1 0 0-13Z" fill="#e1444c" fill-rule="evenodd" stroke="#fff" stroke-width="1" stroke-linejoin="round"/><circle cx="0" cy="-11.3" r="2.38" fill="none" stroke="#fff" stroke-width="1.4"/></g>
<g transform="translate(344.1 299.4)"><ellipse cx="0" cy=".9" rx="4" ry=".9" fill="#3b5a45" fill-opacity=".25"/><path d="M0-.1C-1.5-2.8-4.6-5.8-5.65-8.6A6.3 6.3 0 1 1 5.65-8.6C4.6-5.800 1.5-2.8 0-.1ZM0-13A1.7 1.7 0 1 0 0-9.600A1.7 1.7 0 1 0 0-13Z" fill="#e1444c" fill-rule="evenodd" stroke="#fff" stroke-width="1" stroke-linejoin="round"/><circle cx="0" cy="-11.3" r="2.38" fill="none" stroke="#fff" stroke-width="1.4"/></g>
<g transform="translate(243.2 308.7)"><ellipse cx="0" cy=".9" rx="4" ry=".9" fill="#3b5a45" fill-opacity=".25"/><path d="M0-.1C-1.5-2.8-4.6-5.8-5.65-8.6A6.3 6.3 0 1 1 5.65-8.6C4.6-5.800 1.5-2.8 0-.1ZM0-13A1.7 1.7 0 1 0 0-9.600A1.7 1.7 0 1 0 0-13Z" fill="#e1444c" fill-rule="evenodd" stroke="#fff" stroke-width="1" stroke-linejoin="round"/><circle cx="0" cy="-11.3" r="2.38" fill="none" stroke="#fff" stroke-width="1.4"/></g>
<g transform="translate(463.5 318.4)"><ellipse cx="0" cy=".9" rx="4" ry=".9" fill="#3b5a45" fill-opacity=".25"/><path d="M0-.1C-1.5-2.8-4.6-5.8-5.65-8.6A6.3 6.3 0 1 1 5.65-8.6C4.6-5.800 1.5-2.8 0-.1ZM0-13A1.7 1.7 0 1 0 0-9.600A1.7 1.7 0 1 0 0-13Z" fill="#e1444c" fill-rule="evenodd" stroke="#fff" stroke-width="1" stroke-linejoin="round"/><circle cx="0" cy="-11.3" r="2.38" fill="none" stroke="#fff" stroke-width="1.4"/></g>
<g transform="translate(192.2 338.8)"><ellipse cx="0" cy=".9" rx="4" ry=".9" fill="#3b5a45" fill-opacity=".25"/><path d="M0-.1C-1.5-2.8-4.6-5.8-5.65-8.6A6.3 6.3 0 1 1 5.65-8.6C4.6-5.800 1.5-2.8 0-.1ZM0-13A1.7 1.7 0 1 0 0-9.600A1.7 1.7 0 1 0 0-13Z" fill="#e1444c" fill-rule="evenodd" stroke="#fff" stroke-width="1" stroke-linejoin="round"/><circle cx="0" cy="-11.3" r="2.38" fill="none" stroke="#fff" stroke-width="1.4"/></g>
<g transform="translate(406 351.3)"><ellipse cx="0" cy=".9" rx="4" ry=".9" fill="#3b5a45" fill-opacity=".25"/><path d="M0-.1C-1.5-2.8-4.6-5.8-5.65-8.6A6.3 6.3 0 1 1 5.65-8.6C4.6-5.800 1.5-2.8 0-.1ZM0-13A1.7 1.7 0 1 0 0-9.600A1.7 1.7 0 1 0 0-13Z" fill="#e1444c" fill-rule="evenodd" stroke="#fff" stroke-width="1" stroke-linejoin="round"/><circle cx="0" cy="-11.3" r="2.38" fill="none" stroke="#fff" stroke-width="1.4"/></g>
<g transform="translate(143 356.8)"><ellipse cx="0" cy=".9" rx="4" ry=".9" fill="#3b5a45" fill-opacity=".25"/><path d="M0-.1C-1.5-2.8-4.6-5.8-5.65-8.6A6.3 6.3 0 1 1 5.65-8.6C4.6-5.800 1.5-2.8 0-.1ZM0-13A1.7 1.7 0 1 0 0-9.600A1.7 1.7 0 1 0 0-13Z" fill="#e1444c" fill-rule="evenodd" stroke="#fff" stroke-width="1" stroke-linejoin="round"/><circle cx="0" cy="-11.3" r="2.38" fill="none" stroke="#fff" stroke-width="1.4"/></g>
<g transform="translate(238.9 360.2)"><ellipse cx="0" cy=".9" rx="4" ry=".9" fill="#3b5a45" fill-opacity=".25"/><path d="M0-.1C-1.5-2.8-4.6-5.8-5.65-8.6A6.3 6.3 0 1 1 5.65-8.6C4.6-5.800 1.5-2.8 0-.1ZM0-13A1.7 1.7 0 1 0 0-9.600A1.7 1.7 0 1 0 0-13Z" fill="#e1444c" fill-rule="evenodd" stroke="#fff" stroke-width="1" stroke-linejoin="round"/><circle cx="0" cy="-11.3" r="2.38" fill="none" stroke="#fff" stroke-width="1.4"/></g>
<g transform="translate(329 373.1)"><ellipse cx="0" cy=".9" rx="4" ry=".9" fill="#3b5a45" fill-opacity=".25"/><path d="M0-.1C-1.5-2.8-4.6-5.8-5.65-8.6A6.3 6.3 0 1 1 5.65-8.6C4.6-5.800 1.5-2.8 0-.1ZM0-13A1.7 1.7 0 1 0 0-9.600A1.7 1.7 0 1 0 0-13Z" fill="#e1444c" fill-rule="evenodd" stroke="#fff" stroke-width="1" stroke-linejoin="round"/><circle cx="0" cy="-11.3" r="2.38" fill="none" stroke="#fff" stroke-width="1.4"/></g>
<g transform="translate(434.8 399.2)"><ellipse cx="0" cy=".9" rx="4" ry=".9" fill="#3b5a45" fill-opacity=".25"/><path d="M0-.1C-1.5-2.8-4.6-5.8-5.65-8.6A6.3 6.3 0 1 1 5.65-8.6C4.6-5.800 1.5-2.8 0-.1ZM0-13A1.7 1.7 0 1 0 0-9.600A1.7 1.7 0 1 0 0-13Z" fill="#e1444c" fill-rule="evenodd" stroke="#fff" stroke-width="1" stroke-linejoin="round"/><circle cx="0" cy="-11.3" r="2.38" fill="none" stroke="#fff" stroke-width="1.4"/></g>
<g transform="translate(339.2 408.3)"><ellipse cx="0" cy=".9" rx="4" ry=".9" fill="#3b5a45" fill-opacity=".25"/><path d="M0-.1C-1.5-2.8-4.6-5.8-5.65-8.6A6.3 6.3 0 1 1 5.65-8.6C4.6-5.800 1.5-2.8 0-.1ZM0-13A1.7 1.7 0 1 0 0-9.600A1.7 1.7 0 1 0 0-13Z" fill="#e1444c" fill-rule="evenodd" stroke="#fff" stroke-width="1" stroke-linejoin="round"/><circle cx="0" cy="-11.3" r="2.38" fill="none" stroke="#fff" stroke-width="1.4"/></g>
</svg><!--MAPEND--></div>
 </div>
</div>
</body>
</html>
